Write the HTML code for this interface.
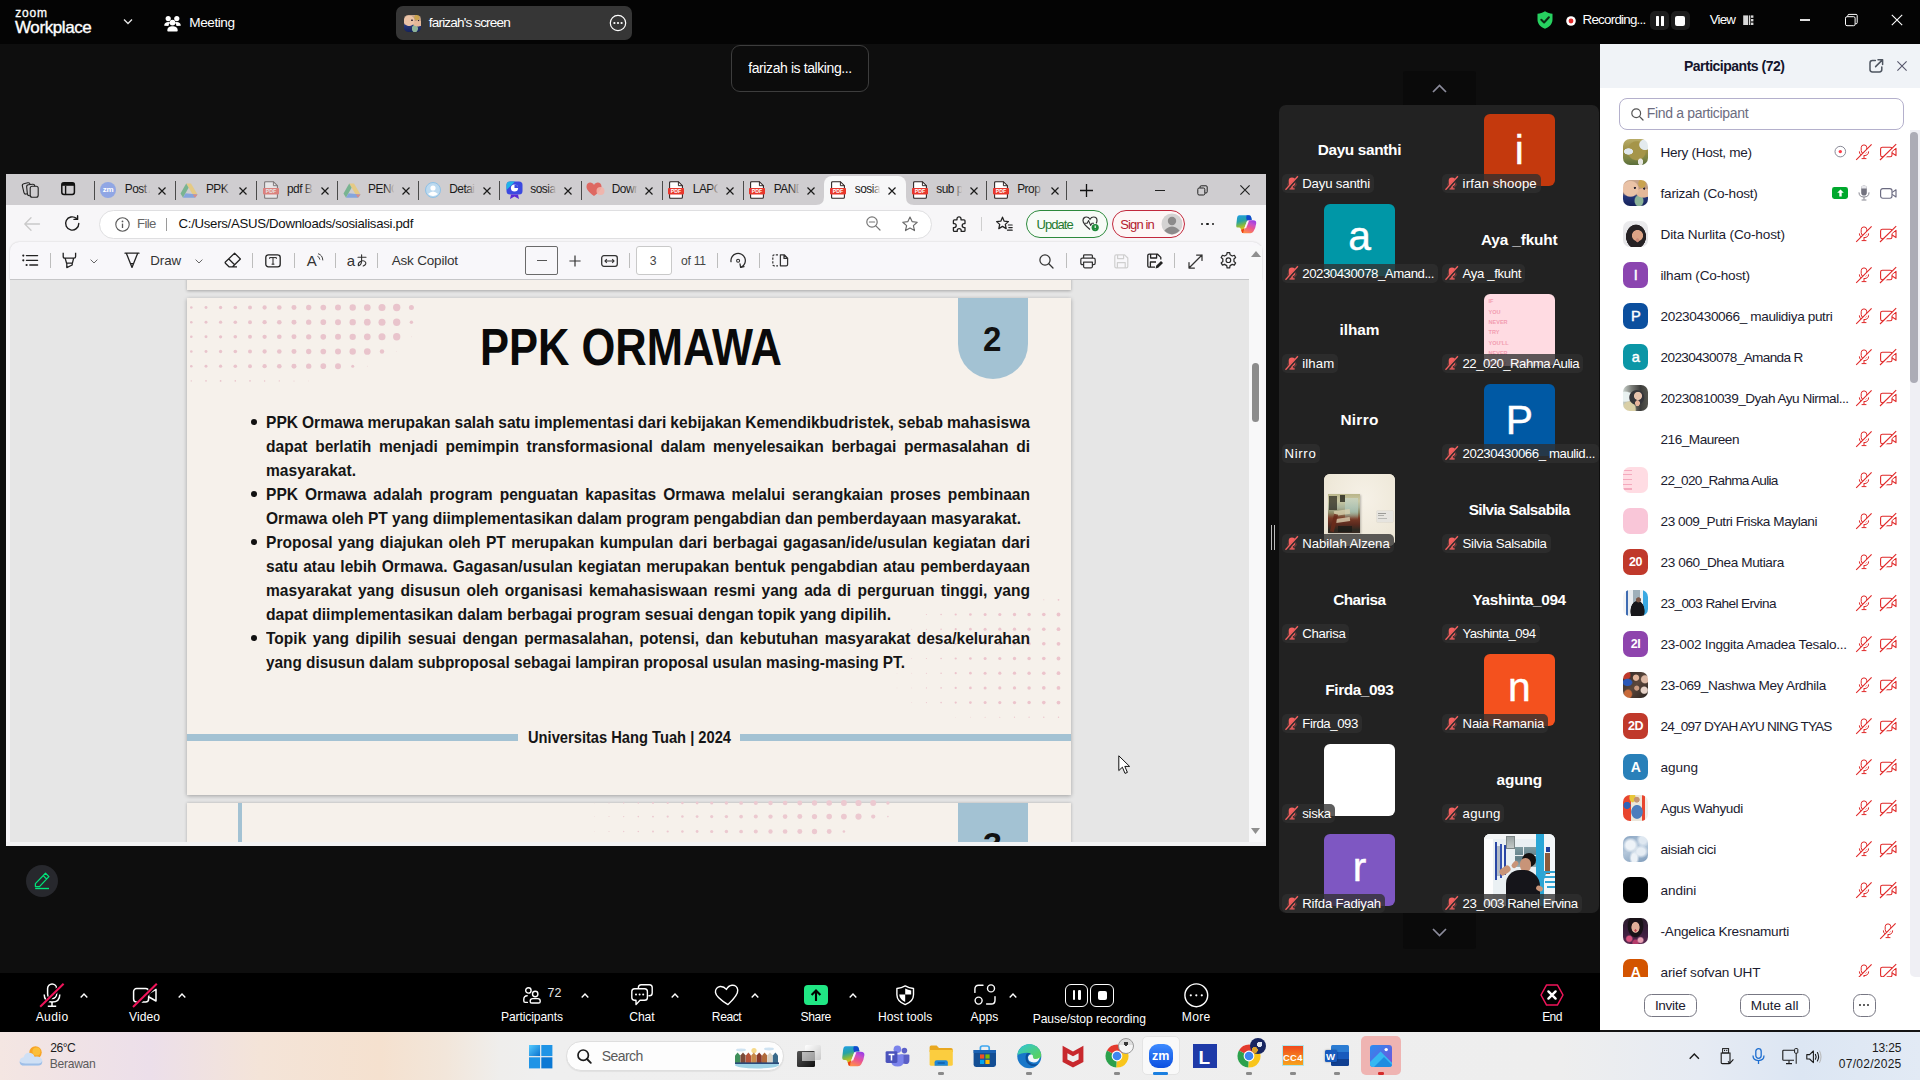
<!DOCTYPE html>
<html><head><meta charset="utf-8">
<style>
*{box-sizing:border-box;margin:0;padding:0}
html,body{width:1920px;height:1080px;overflow:hidden;background:#0e0e0e;font-family:"Liberation Sans",sans-serif;}
.abs{position:absolute}
#root{position:relative;width:1920px;height:1080px;overflow:hidden;background:#0e0e0e}
#topbar{left:0;top:0;width:1920px;height:44px;background:#040404;color:#fff}
svg{display:block;overflow:visible}
.t{position:absolute;white-space:nowrap;line-height:1}
</style></head><body><div id="root">

<div id="topbar" class="abs"><div class="t" style="left:15.34px;top:6.64px;font-size:12px;color:#fff;letter-spacing:0.775px;-webkit-text-stroke:0.3px #fff;">zoom</div>
<div class="t" style="left:15.06px;top:18.61px;font-size:17px;color:#fff;letter-spacing:-0.412px;-webkit-text-stroke:0.35px #fff;">Workplace</div>
<svg class="abs" style="left:123px;top:18px;" width="10" height="8" viewBox="0 0 10 8"><path d="M1 1.5 L5 5.5 L9 1.5" fill="none" stroke="#e8e8e8" stroke-width="1.3"/></svg>
<svg class="abs" style="left:164px;top:15px;" width="17" height="17" viewBox="0 0 17 17"><g fill="#fff"><circle cx="4.2" cy="3.6" r="2.6"/><circle cx="12.8" cy="3.6" r="2.6"/>
<path d="M0.2 10.8 C0.2 8 2 6.9 4.2 6.9 C5.2 6.9 6 7.1 6.6 7.5 C5.3 8.3 4.6 9.6 4.5 11 Z"/>
<path d="M16.8 10.8 C16.8 8 15 6.9 12.8 6.9 C11.8 6.9 11 7.1 10.4 7.5 C11.7 8.3 12.4 9.6 12.5 11 Z"/>
<circle cx="8.5" cy="7.6" r="2.9"/><path d="M3.3 15.6 C3.3 12.4 5.6 11.2 8.5 11.2 C11.4 11.2 13.7 12.4 13.7 15.6 C13.7 16.3 13.2 16.6 12.6 16.6 L4.4 16.6 C3.8 16.6 3.3 16.3 3.3 15.6 Z"/></g></svg>
<div class="t" style="left:189.25px;top:16.09px;font-size:13.6px;color:#fff;letter-spacing:-0.427px;">Meeting</div>
<div class="abs" style="left:396.2px;top:5.9px;width:235.8px;height:34px;background:#363636;border-radius:7px;"></div>
<div class="abs" style="left:404px;top:14.6px;width:17px;height:17px;background:#ccc;border-radius:4.5px;background:radial-gradient(circle at 47% 30%,#2b2430 0 4%,rgba(0,0,0,0) 6%),radial-gradient(circle at 85% 33%,#2b2430 0 3%,rgba(0,0,0,0) 5%),radial-gradient(ellipse at 30% 34%,#eac2a6 0 30%,rgba(0,0,0,0) 35%),radial-gradient(ellipse at 82% 50%,#e4b899 0 23%,rgba(0,0,0,0) 27%),radial-gradient(ellipse at 76% 14%,#c9a24e 0 12%,rgba(0,0,0,0) 16%),radial-gradient(ellipse at 64% 80%,#8db398 0 17%,rgba(0,0,0,0) 22%),linear-gradient(180deg,#c8a68e 0%,#b6927a 45%,#26377a 62%,#15225a 100%);"></div>
<div class="t" style="left:428.85px;top:16.09px;font-size:13.6px;color:#fff;letter-spacing:-0.858px;">farizah&#x27;s screen</div>
<svg class="abs" style="left:609px;top:14px;" width="18" height="18" viewBox="0 0 18 18"><circle cx="9" cy="9" r="7.7" fill="none" stroke="#fff" stroke-width="1.2"/><circle cx="5.4" cy="9" r="1.1" fill="#fff"/><circle cx="9" cy="9" r="1.1" fill="#fff"/><circle cx="12.6" cy="9" r="1.1" fill="#fff"/></svg>
<svg class="abs" style="left:1537px;top:11px;" width="16" height="18" viewBox="0 0 16 18"><path d="M8 0.3 C5.6 1.9 3 2.6 0.5 2.8 L0.5 8.5 C0.5 13 3.6 16.2 8 17.7 C12.4 16.2 15.5 13 15.5 8.5 L15.5 2.8 C13 2.6 10.4 1.9 8 0.3 Z" fill="#27d160"/><path d="M4.3 8.8 L7.1 11.5 L11.9 6.3" fill="none" stroke="#0b2a14" stroke-width="2" stroke-linecap="round" stroke-linejoin="round"/></svg>
<svg class="abs" style="left:1566px;top:16px;" width="10" height="10" viewBox="0 0 10 10"><circle cx="5" cy="5" r="4.8" fill="#fff"/><circle cx="5" cy="5" r="2.4" fill="#e02828"/></svg>
<div class="t" style="left:1582.56px;top:13.36px;font-size:13.4px;color:#fff;letter-spacing:-0.777px;">Recording...</div>
<div class="abs" style="left:1650px;top:11px;width:19px;height:19px;background:#1d1d1d;border-radius:5px;"></div>
<div class="abs" style="left:1655.8px;top:15.5px;width:3.2px;height:10.8px;background:#fff;border-radius:0.6px;"></div>
<div class="abs" style="left:1660.8px;top:15.5px;width:3.2px;height:10.8px;background:#fff;border-radius:0.6px;"></div>
<div class="abs" style="left:1671px;top:11px;width:19px;height:19px;background:#1d1d1d;border-radius:5px;"></div>
<div class="abs" style="left:1675px;top:15.8px;width:10px;height:10px;background:#fff;border-radius:2px;"></div>
<div class="t" style="left:1709.76px;top:13.36px;font-size:13.4px;color:#fff;letter-spacing:-0.877px;">View</div>
<svg class="abs" style="left:1743px;top:15px;" width="11" height="11" viewBox="0 0 11 11"><rect x="0.2" y="0.4" width="5" height="9.6" fill="#d8d8d8"/><rect x="6" y="0.4" width="1.3" height="9.6" fill="#d8d8d8"/><rect x="8" y="0.4" width="2.4" height="2.4" fill="#d8d8d8"/><rect x="8" y="4" width="2.4" height="2.4" fill="#d8d8d8"/><rect x="8" y="7.6" width="2.4" height="2.4" fill="#d8d8d8"/></svg>
<div class="abs" style="left:1799.6px;top:19.4px;width:10.8px;height:1.2px;background:#e0e0e0;"></div>
<svg class="abs" style="left:1844px;top:13px;" width="14" height="14" viewBox="0 0 14 14"><rect x="1.5" y="3.7" width="9.6" height="9" rx="1.5" fill="none" stroke="#fff" stroke-width="1"/><path d="M3.8 3.5 V2.6 Q3.8 1.4 5 1.4 H12 Q13.2 1.4 13.2 2.6 V9.6 Q13.2 10.8 12 10.8 H11.3" fill="none" stroke="#fff" stroke-width="1"/></svg>
<svg class="abs" style="left:1891px;top:14px;" width="12" height="12" viewBox="0 0 12 12"><path d="M0.8 0.8 L11.2 11.2 M11.2 0.8 L0.8 11.2" stroke="#fff" stroke-width="1.1"/></svg></div>
<div class="abs" style="left:731px;top:44.5px;width:138px;height:47px;background:#0c0c0c;border:1px solid #3d3d3d;border-radius:9px;"></div>
<div class="t" style="left:748.23px;top:61.35px;font-size:14px;color:#fff;letter-spacing:-0.406px;">farizah is talking...</div>
<div class="abs" style="left:26px;top:864.8px;width:32px;height:32.2px;background:#27282d;border-radius:50%;"></div>
<svg class="abs" style="left:34px;top:872px;" width="17" height="18" viewBox="0 0 17 18"><path d="M1.4 11.6 L11.5 1.2 L14.9 4.6 L5.5 14.6 H1.4 Z M9.2 3.6 L12.6 7" fill="none" stroke="#00e57a" stroke-width="1.25" stroke-linejoin="round"/><path d="M1.2 16.5 H15" stroke="#00e57a" stroke-width="1.35"/></svg>
<div class="abs" style="left:6px;top:174px;width:1260px;height:671.6px;background:#f7f6f8;overflow:hidden">
<div class="abs" style="left:0px;top:0px;width:1260px;height:30.6px;background:#cfcdd0;"></div>
<svg class="abs" style="left:16px;top:7px;" width="18" height="18" viewBox="0 0 18 18"><rect x="1.2" y="2.2" width="8" height="10.5" rx="2" fill="none" stroke="#222" stroke-width="1.1" transform="rotate(-14 5 8)"/><rect x="5" y="3.5" width="8.2" height="11" rx="2" fill="#cfcdd0" stroke="#222" stroke-width="1.1" transform="rotate(-6 9 9)"/><rect x="8.2" y="5.2" width="8" height="11" rx="2" fill="#cfcdd0" stroke="#222" stroke-width="1.1"/></svg>
<svg class="abs" style="left:55px;top:8px;" width="15" height="14" viewBox="0 0 15 14"><rect x="0.8" y="0.8" width="12.6" height="11.6" rx="2.2" fill="none" stroke="#111" stroke-width="1.5"/><rect x="0.8" y="0.8" width="12.6" height="3" fill="#111"/><path d="M4.6 3.8 V12.4" stroke="#111" stroke-width="1.4"/></svg>
<div class="abs" style="left:87.8px;top:7px;width:1px;height:18.5px;background:#4a4a4a;"></div>
<div class="abs" style="left:94.3px;top:7.5px;width:16px;height:16px;background:#7f9ce8;border-radius:50%;opacity:0.8;"></div><div class="t" style="left:96.86px;top:11.83px;font-size:8px;color:#fff;letter-spacing:-0.273px;font-weight:bold;">zm</div><div class="abs" style="left:118.8px;top:7px;width:27.5px;height:18px;overflow:hidden"><div class="t" style="left:0;top:2.83px;font-size:11.9px;letter-spacing:-0.5px;color:#1a1a1a">Post A</div><div class="abs" style="left:17px;top:0;width:10.5px;height:18px;background:linear-gradient(90deg,rgba(0,0,0,0),#cfcdd0 85%)"></div></div><svg class="abs" style="left:152.3px;top:12.5px;" width="8" height="8" viewBox="0 0 8 8"><path d="M0.5 0.5 L7.5 7.5 M7.5 0.5 L0.5 7.5" stroke="#1a1a1a" stroke-width="1.2"/></svg>
<div class="abs" style="left:168.9px;top:7px;width:1px;height:18.5px;background:#4a4a4a;"></div>
<svg class="abs" style="left:174.4px;top:8px;opacity:0.55;" width="18" height="17" viewBox="0 0 18 17"><path d="M6.2 1.5 L11 1.5 L17.5 12.5 L12.7 12.5 Z" fill="#f7c948"/><path d="M6.2 1.5 L0.5 11.5 L3 15.8 L8.6 5.7 Z" fill="#34a05f"/><path d="M3 15.8 L15 15.8 L17.5 12.5 L5.6 11.3 Z" fill="#4a86e8"/><path d="M12.7 12.5 L17.5 12.5 L15 15.8 Z" fill="#e35b4f"/></svg><div class="abs" style="left:199.9px;top:7px;width:27.5px;height:18px;overflow:hidden"><div class="t" style="left:0;top:2.83px;font-size:11.9px;letter-spacing:-0.5px;color:#1a1a1a">PPK O</div><div class="abs" style="left:17px;top:0;width:10.5px;height:18px;background:linear-gradient(90deg,rgba(0,0,0,0),#cfcdd0 85%)"></div></div><svg class="abs" style="left:233.4px;top:12.5px;" width="8" height="8" viewBox="0 0 8 8"><path d="M0.5 0.5 L7.5 7.5 M7.5 0.5 L0.5 7.5" stroke="#1a1a1a" stroke-width="1.2"/></svg>
<div class="abs" style="left:250.0px;top:7px;width:1px;height:18.5px;background:#4a4a4a;"></div>
<svg class="abs" style="left:256.5px;top:7px;opacity:0.5;" width="16" height="18" viewBox="0 0 16 18"><path d="M2.6 0.7 H10.4 L14.4 4.7 V16.3 Q14.4 17.3 13.4 17.3 H2.6 Q1.6 17.3 1.6 16.3 V1.7 Q1.6 0.7 2.6 0.7 Z" fill="#fff" stroke="#2a2020" stroke-width="1.05"/><path d="M10.4 0.7 V4.7 H14.4" fill="none" stroke="#2a2020" stroke-width="0.95"/><rect x="0" y="7" width="16" height="6.4" rx="0.8" fill="#e8372c"/><text x="8" y="12.1" font-size="5.2" font-weight="bold" fill="#fff" text-anchor="middle" font-family="Liberation Sans" >PDF</text></svg><div class="abs" style="left:281.0px;top:7px;width:27.5px;height:18px;overflow:hidden"><div class="t" style="left:0;top:2.83px;font-size:11.9px;letter-spacing:-0.5px;color:#1a1a1a">pdf B</div><div class="abs" style="left:17px;top:0;width:10.5px;height:18px;background:linear-gradient(90deg,rgba(0,0,0,0),#cfcdd0 85%)"></div></div><svg class="abs" style="left:314.5px;top:12.5px;" width="8" height="8" viewBox="0 0 8 8"><path d="M0.5 0.5 L7.5 7.5 M7.5 0.5 L0.5 7.5" stroke="#1a1a1a" stroke-width="1.2"/></svg>
<div class="abs" style="left:331.1px;top:7px;width:1px;height:18.5px;background:#4a4a4a;"></div>
<svg class="abs" style="left:336.6px;top:8px;opacity:0.55;" width="18" height="17" viewBox="0 0 18 17"><path d="M6.2 1.5 L11 1.5 L17.5 12.5 L12.7 12.5 Z" fill="#f7c948"/><path d="M6.2 1.5 L0.5 11.5 L3 15.8 L8.6 5.7 Z" fill="#34a05f"/><path d="M3 15.8 L15 15.8 L17.5 12.5 L5.6 11.3 Z" fill="#4a86e8"/><path d="M12.7 12.5 L17.5 12.5 L15 15.8 Z" fill="#e35b4f"/></svg><div class="abs" style="left:362.1px;top:7px;width:27.5px;height:18px;overflow:hidden"><div class="t" style="left:0;top:2.83px;font-size:11.9px;letter-spacing:-0.5px;color:#1a1a1a">PENC</div><div class="abs" style="left:17px;top:0;width:10.5px;height:18px;background:linear-gradient(90deg,rgba(0,0,0,0),#cfcdd0 85%)"></div></div><svg class="abs" style="left:395.6px;top:12.5px;" width="8" height="8" viewBox="0 0 8 8"><path d="M0.5 0.5 L7.5 7.5 M7.5 0.5 L0.5 7.5" stroke="#1a1a1a" stroke-width="1.2"/></svg>
<div class="abs" style="left:412.2px;top:7px;width:1px;height:18.5px;background:#4a4a4a;"></div>
<svg class="abs" style="left:418.7px;top:7.5px;" width="16" height="16" viewBox="0 0 16 16"><circle cx="8" cy="8" r="7.5" fill="#bcd9ef"/><circle cx="8" cy="6" r="2.6" fill="#fff"/><path d="M3 12 Q8 7 13 12 Q8 16 3 12Z" fill="#fff"/><circle cx="8" cy="8" r="7.5" fill="none" stroke="#8fc1e6" stroke-width="1"/></svg><div class="abs" style="left:443.2px;top:7px;width:27.5px;height:18px;overflow:hidden"><div class="t" style="left:0;top:2.83px;font-size:11.9px;letter-spacing:-0.5px;color:#1a1a1a">Detail</div><div class="abs" style="left:17px;top:0;width:10.5px;height:18px;background:linear-gradient(90deg,rgba(0,0,0,0),#cfcdd0 85%)"></div></div><svg class="abs" style="left:476.7px;top:12.5px;" width="8" height="8" viewBox="0 0 8 8"><path d="M0.5 0.5 L7.5 7.5 M7.5 0.5 L0.5 7.5" stroke="#1a1a1a" stroke-width="1.2"/></svg>
<div class="abs" style="left:493.3px;top:7px;width:1px;height:18.5px;background:#4a4a4a;"></div>
<svg class="abs" style="left:499.8px;top:6.5px;" width="17" height="19" viewBox="0 0 17 19"><rect x="0.5" y="0.5" width="16" height="13" rx="3.5" fill="#3b49e0"/><path d="M0.5 4 Q0.5 0.5 4 0.5 H9 L0.5 9Z" fill="#1fb4e8"/><circle cx="8.5" cy="7" r="3.6" fill="#fff"/><path d="M8.5 7 V3.4 A3.6 3.6 0 0 1 12.1 7 Z" fill="#3b49e0"/><path d="M5 13.5 L4 18 L8.5 15.5 L13 18 L12 13.5Z" fill="#5a2ad6"/></svg><div class="abs" style="left:524.3px;top:7px;width:27.5px;height:18px;overflow:hidden"><div class="t" style="left:0;top:2.83px;font-size:11.9px;letter-spacing:-0.5px;color:#1a1a1a">sosial</div><div class="abs" style="left:17px;top:0;width:10.5px;height:18px;background:linear-gradient(90deg,rgba(0,0,0,0),#cfcdd0 85%)"></div></div><svg class="abs" style="left:557.8px;top:12.5px;" width="8" height="8" viewBox="0 0 8 8"><path d="M0.5 0.5 L7.5 7.5 M7.5 0.5 L0.5 7.5" stroke="#1a1a1a" stroke-width="1.2"/></svg>
<div class="abs" style="left:574.7px;top:7px;width:1px;height:18.5px;background:#4a4a4a;"></div>
<svg class="abs" style="left:580.2px;top:8px;" width="19" height="16" viewBox="0 0 19 16"><path d="M8 14 C2 9.5 0.5 6.8 0.5 4.4 C0.5 2 2.3 0.6 4.2 0.6 C5.8 0.6 7.2 1.5 8 2.9 C8.8 1.5 10.2 0.6 11.8 0.6 C13.7 0.6 15.5 2 15.5 4.4 C15.5 6.8 14 9.5 8 14Z" fill="#e0564f" opacity="0.85"/><circle cx="14.5" cy="9" r="4" fill="#f2b2a8" opacity="0.9"/></svg><div class="abs" style="left:605.7px;top:7px;width:27.5px;height:18px;overflow:hidden"><div class="t" style="left:0;top:2.83px;font-size:11.9px;letter-spacing:-0.5px;color:#1a1a1a">Down</div><div class="abs" style="left:17px;top:0;width:10.5px;height:18px;background:linear-gradient(90deg,rgba(0,0,0,0),#cfcdd0 85%)"></div></div><svg class="abs" style="left:639.2px;top:12.5px;" width="8" height="8" viewBox="0 0 8 8"><path d="M0.5 0.5 L7.5 7.5 M7.5 0.5 L0.5 7.5" stroke="#1a1a1a" stroke-width="1.2"/></svg>
<div class="abs" style="left:655.8px;top:7px;width:1px;height:18.5px;background:#4a4a4a;"></div>
<svg class="abs" style="left:662.3px;top:7px;" width="16" height="18" viewBox="0 0 16 18"><path d="M2.6 0.7 H10.4 L14.4 4.7 V16.3 Q14.4 17.3 13.4 17.3 H2.6 Q1.6 17.3 1.6 16.3 V1.7 Q1.6 0.7 2.6 0.7 Z" fill="#fff" stroke="#2a2020" stroke-width="1.05"/><path d="M10.4 0.7 V4.7 H14.4" fill="none" stroke="#2a2020" stroke-width="0.95"/><rect x="0" y="7" width="16" height="6.4" rx="0.8" fill="#e8372c"/><text x="8" y="12.1" font-size="5.2" font-weight="bold" fill="#fff" text-anchor="middle" font-family="Liberation Sans" >PDF</text></svg><div class="abs" style="left:686.8px;top:7px;width:27.5px;height:18px;overflow:hidden"><div class="t" style="left:0;top:2.83px;font-size:11.9px;letter-spacing:-0.5px;color:#1a1a1a">LAPO</div><div class="abs" style="left:17px;top:0;width:10.5px;height:18px;background:linear-gradient(90deg,rgba(0,0,0,0),#cfcdd0 85%)"></div></div><svg class="abs" style="left:720.3px;top:12.5px;" width="8" height="8" viewBox="0 0 8 8"><path d="M0.5 0.5 L7.5 7.5 M7.5 0.5 L0.5 7.5" stroke="#1a1a1a" stroke-width="1.2"/></svg>
<div class="abs" style="left:736.8px;top:7px;width:1px;height:18.5px;background:#4a4a4a;"></div>
<svg class="abs" style="left:743.3px;top:7px;" width="16" height="18" viewBox="0 0 16 18"><path d="M2.6 0.7 H10.4 L14.4 4.7 V16.3 Q14.4 17.3 13.4 17.3 H2.6 Q1.6 17.3 1.6 16.3 V1.7 Q1.6 0.7 2.6 0.7 Z" fill="#fff" stroke="#2a2020" stroke-width="1.05"/><path d="M10.4 0.7 V4.7 H14.4" fill="none" stroke="#2a2020" stroke-width="0.95"/><rect x="0" y="7" width="16" height="6.4" rx="0.8" fill="#e8372c"/><text x="8" y="12.1" font-size="5.2" font-weight="bold" fill="#fff" text-anchor="middle" font-family="Liberation Sans" >PDF</text></svg><div class="abs" style="left:767.8px;top:7px;width:27.5px;height:18px;overflow:hidden"><div class="t" style="left:0;top:2.83px;font-size:11.9px;letter-spacing:-0.5px;color:#1a1a1a">PAND</div><div class="abs" style="left:17px;top:0;width:10.5px;height:18px;background:linear-gradient(90deg,rgba(0,0,0,0),#cfcdd0 85%)"></div></div><svg class="abs" style="left:801.3px;top:12.5px;" width="8" height="8" viewBox="0 0 8 8"><path d="M0.5 0.5 L7.5 7.5 M7.5 0.5 L0.5 7.5" stroke="#1a1a1a" stroke-width="1.2"/></svg>
<div class="abs" style="left:818.3px;top:1.5px;width:81.4px;height:30px;background:#f7f7f8;border-radius:8px 8px 0 0;"></div>
<svg class="abs" style="left:810.3px;top:22.599999999999994px;" width="8" height="8" viewBox="0 0 8 8"><path d="M8 0 V8 H0 Q8 8 8 0Z" fill="#f7f7f8"/></svg>
<svg class="abs" style="left:899.7px;top:22.599999999999994px;" width="8" height="8" viewBox="0 0 8 8"><path d="M0 0 V8 H8 Q0 8 0 0Z" fill="#f7f7f8"/></svg>
<svg class="abs" style="left:824.3px;top:7px;" width="16" height="18" viewBox="0 0 16 18"><path d="M2.6 0.7 H10.4 L14.4 4.7 V16.3 Q14.4 17.3 13.4 17.3 H2.6 Q1.6 17.3 1.6 16.3 V1.7 Q1.6 0.7 2.6 0.7 Z" fill="#fff" stroke="#2a2020" stroke-width="1.05"/><path d="M10.4 0.7 V4.7 H14.4" fill="none" stroke="#2a2020" stroke-width="0.95"/><rect x="0" y="7" width="16" height="6.4" rx="0.8" fill="#e8372c"/><text x="8" y="12.1" font-size="5.2" font-weight="bold" fill="#fff" text-anchor="middle" font-family="Liberation Sans" >PDF</text></svg><div class="abs" style="left:848.8px;top:7px;width:27.5px;height:18px;overflow:hidden"><div class="t" style="left:0;top:2.83px;font-size:11.9px;letter-spacing:-0.5px;color:#1a1a1a">sosial</div><div class="abs" style="left:17px;top:0;width:10.5px;height:18px;background:linear-gradient(90deg,rgba(0,0,0,0),#f7f7f8 85%)"></div></div><svg class="abs" style="left:882.3px;top:12.5px;" width="8" height="8" viewBox="0 0 8 8"><path d="M0.5 0.5 L7.5 7.5 M7.5 0.5 L0.5 7.5" stroke="#1a1a1a" stroke-width="1.2"/></svg>
<svg class="abs" style="left:905.7px;top:7px;" width="16" height="18" viewBox="0 0 16 18"><path d="M2.6 0.7 H10.4 L14.4 4.7 V16.3 Q14.4 17.3 13.4 17.3 H2.6 Q1.6 17.3 1.6 16.3 V1.7 Q1.6 0.7 2.6 0.7 Z" fill="#fff" stroke="#2a2020" stroke-width="1.05"/><path d="M10.4 0.7 V4.7 H14.4" fill="none" stroke="#2a2020" stroke-width="0.95"/><rect x="0" y="7" width="16" height="6.4" rx="0.8" fill="#e8372c"/><text x="8" y="12.1" font-size="5.2" font-weight="bold" fill="#fff" text-anchor="middle" font-family="Liberation Sans" >PDF</text></svg><div class="abs" style="left:930.2px;top:7px;width:27.5px;height:18px;overflow:hidden"><div class="t" style="left:0;top:2.83px;font-size:11.9px;letter-spacing:-0.5px;color:#1a1a1a">sub p</div><div class="abs" style="left:17px;top:0;width:10.5px;height:18px;background:linear-gradient(90deg,rgba(0,0,0,0),#cfcdd0 85%)"></div></div><svg class="abs" style="left:963.7px;top:12.5px;" width="8" height="8" viewBox="0 0 8 8"><path d="M0.5 0.5 L7.5 7.5 M7.5 0.5 L0.5 7.5" stroke="#1a1a1a" stroke-width="1.2"/></svg>
<div class="abs" style="left:980.2px;top:7px;width:1px;height:18.5px;background:#4a4a4a;"></div>
<svg class="abs" style="left:986.7px;top:7px;" width="16" height="18" viewBox="0 0 16 18"><path d="M2.6 0.7 H10.4 L14.4 4.7 V16.3 Q14.4 17.3 13.4 17.3 H2.6 Q1.6 17.3 1.6 16.3 V1.7 Q1.6 0.7 2.6 0.7 Z" fill="#fff" stroke="#2a2020" stroke-width="1.05"/><path d="M10.4 0.7 V4.7 H14.4" fill="none" stroke="#2a2020" stroke-width="0.95"/><rect x="0" y="7" width="16" height="6.4" rx="0.8" fill="#e8372c"/><text x="8" y="12.1" font-size="5.2" font-weight="bold" fill="#fff" text-anchor="middle" font-family="Liberation Sans" >PDF</text></svg><div class="abs" style="left:1011.2px;top:7px;width:27.5px;height:18px;overflow:hidden"><div class="t" style="left:0;top:2.83px;font-size:11.9px;letter-spacing:-0.5px;color:#1a1a1a">Prop</div><div class="abs" style="left:17px;top:0;width:10.5px;height:18px;background:linear-gradient(90deg,rgba(0,0,0,0),#cfcdd0 85%)"></div></div><svg class="abs" style="left:1044.7px;top:12.5px;" width="8" height="8" viewBox="0 0 8 8"><path d="M0.5 0.5 L7.5 7.5 M7.5 0.5 L0.5 7.5" stroke="#1a1a1a" stroke-width="1.2"/></svg>
<div class="abs" style="left:1060.2px;top:7px;width:1px;height:18.5px;background:#4a4a4a;"></div>
<svg class="abs" style="left:1074px;top:9.5px;" width="13" height="13" viewBox="0 0 13 13"><path d="M6.5 0 V13 M0 6.5 H13" stroke="#111" stroke-width="1.3"/></svg>
<div class="abs" style="left:1149px;top:15.800000000000011px;width:10px;height:1.1px;background:#222;"></div>
<svg class="abs" style="left:1191px;top:10.5px;" width="11" height="11" viewBox="0 0 11 11"><rect x="0.8" y="3" width="7" height="7" rx="1.3" fill="none" stroke="#222" stroke-width="1"/><path d="M3 2.8 V2 Q3 0.8 4.2 0.8 H9 Q10.2 0.8 10.2 2 V6.8 Q10.2 8 9 8 H8" fill="none" stroke="#222" stroke-width="1"/></svg>
<svg class="abs" style="left:1234px;top:11px;" width="10" height="10" viewBox="0 0 10 10"><path d="M0.4 0.4 L9.6 9.6 M9.6 0.4 L0.4 9.6" stroke="#222" stroke-width="1.15"/></svg>
<svg class="abs" style="left:18px;top:43px;" width="16" height="14" viewBox="0 0 16 14"><path d="M15.5 7 H1.2 M7 0.8 L0.8 7 L7 13.2" fill="none" stroke="#c9c9c9" stroke-width="1.3" stroke-linecap="round" stroke-linejoin="round"/></svg>
<svg class="abs" style="left:58px;top:41px;" width="17" height="17" viewBox="0 0 17 17"><path d="M14.8 8.5 A6.6 6.6 0 1 1 12.4 3.4" fill="none" stroke="#1a1a1a" stroke-width="1.4" stroke-linecap="round"/><path d="M13.6 0.8 V4.4 H10" fill="none" stroke="#1a1a1a" stroke-width="1.4" stroke-linecap="round" stroke-linejoin="round"/></svg>
<div class="abs" style="left:93px;top:35.5px;width:833px;height:29px;background:#fff;border:1px solid #dfdfe1;border-radius:15px;"></div>
<svg class="abs" style="left:108.5px;top:42.5px;" width="15" height="15" viewBox="0 0 15 15"><circle cx="7.5" cy="7.5" r="6.7" fill="none" stroke="#5a5a5a" stroke-width="1.1"/><circle cx="7.5" cy="4.4" r="0.9" fill="#5a5a5a"/><path d="M7.5 6.6 V11" stroke="#5a5a5a" stroke-width="1.3"/></svg>
<div class="t" style="left:130.97px;top:43.43px;font-size:13.2px;color:#666;letter-spacing:-0.625px;">File</div>
<div class="abs" style="left:160.3px;top:43.5px;width:1px;height:13px;background:#9a9a9a;"></div>
<div class="t" style="left:172.57px;top:43.33px;font-size:13.2px;color:#111;letter-spacing:-0.284px;">C:/Users/ASUS/Downloads/sosialisasi.pdf</div>
<svg class="abs" style="left:860px;top:42px;" width="15" height="15" viewBox="0 0 15 15"><circle cx="6" cy="6" r="5.2" fill="none" stroke="#767676" stroke-width="1.2"/><path d="M3.4 6 H8.6 M9.8 9.8 L14 14" stroke="#767676" stroke-width="1.2" stroke-linecap="round"/></svg>
<svg class="abs" style="left:896px;top:41.5px;" width="16" height="16" viewBox="0 0 16 16"><path d="M8 1 L10.1 5.6 L15.2 6.2 L11.4 9.6 L12.5 14.6 L8 12 L3.5 14.6 L4.6 9.6 L0.8 6.2 L5.9 5.6 Z" fill="none" stroke="#6a6a6a" stroke-width="1.15" stroke-linejoin="round"/></svg>
<svg class="abs" style="left:945px;top:41.5px;" width="16" height="17" viewBox="0 0 16 17"><path d="M6 2.8 A2 2 0 0 1 10 2.8 V3.8 H13 Q14 3.8 14 4.8 V7.6 H13.2 A2 2 0 0 0 13.2 11.6 H14 V14.4 Q14 15.4 13 15.4 H10.2 V14.6 A2 2 0 0 0 6.2 14.6 V15.4 H3.4 Q2.4 15.4 2.4 14.4 V11.6 H3.2 A2 2 0 0 0 3.2 7.6 H2.4 V4.8 Q2.4 3.8 3.4 3.8 H6 Z" fill="none" stroke="#222" stroke-width="1.3" stroke-linejoin="round"/></svg>
<div class="abs" style="left:975px;top:43px;width:1px;height:14px;background:#cfcfcf;"></div>
<svg class="abs" style="left:990px;top:41.5px;" width="17" height="16" viewBox="0 0 17 16"><path d="M6.5 1.2 L8.2 5.2 L12.4 5.6 L9.3 8.4 L10.2 12.6 L6.5 10.4 L2.8 12.6 L3.7 8.4 L0.6 5.6 L4.8 5.2 Z" fill="none" stroke="#222" stroke-width="1.25" stroke-linejoin="round"/><path d="M12.4 9 H16.2 M12.8 11.6 H16.2 M11.5 14.2 H16.2" stroke="#222" stroke-width="1.2" stroke-linecap="round"/></svg>
<div class="abs" style="left:1020px;top:36px;width:81.5px;height:28px;background:#f7fbf7;border:1.3px solid #2c8a3c;border-radius:14px;"></div>
<div class="t" style="left:1030.59px;top:43.50px;font-size:13px;color:#1f7a2e;letter-spacing:-0.960px;">Update</div>
<svg class="abs" style="left:1075.5px;top:42px;" width="18" height="16" viewBox="0 0 18 16"><path d="M8 13.5 C3 9.6 1 7.2 1 4.6 C1 2.4 2.7 1 4.4 1 C6 1 7.3 2 8 3.2 C8.7 2 10 1 11.6 1 C13.3 1 15 2.4 15 4.6 C15 5.6 14.7 6.5 14.2 7.4" fill="none" stroke="#333" stroke-width="1.2"/><path d="M2.4 7.2 H5.2 L6.6 4.6 L8.6 9.4 L10 7.2 H12" fill="none" stroke="#333" stroke-width="1.1" stroke-linejoin="round"/><circle cx="13.2" cy="11.6" r="3.6" fill="#1f8a3a"/><path d="M13.2 9.6 V12 M13.2 13.2 V13.6" stroke="#fff" stroke-width="1.1"/></svg>
<div class="abs" style="left:1105.7px;top:36px;width:73.5px;height:28px;background:#fdf6f6;border:1.3px solid #c2283c;border-radius:14px;"></div>
<div class="t" style="left:1114.29px;top:43.50px;font-size:13px;color:#b3202f;letter-spacing:-0.863px;">Sign in</div>
<svg class="abs" style="left:1155px;top:39px;" width="22" height="22" viewBox="0 0 22 22"><circle cx="11" cy="11" r="10.5" fill="#d4d2d2"/><circle cx="11" cy="8" r="4.2" fill="#8c8a8a"/><path d="M3.4 17.6 Q11 9.5 18.6 17.6 Q15 21.4 11 21.4 Q7 21.4 3.4 17.6Z" fill="#8c8a8a"/></svg>
<div class="abs" style="left:1194.6px;top:48.80000000000001px;width:2.6px;height:2.6px;background:#1a1a1a;border-radius:50%;"></div>
<div class="abs" style="left:1200.1999999999998px;top:48.80000000000001px;width:2.6px;height:2.6px;background:#1a1a1a;border-radius:50%;"></div>
<div class="abs" style="left:1205.8px;top:48.80000000000001px;width:2.6px;height:2.6px;background:#1a1a1a;border-radius:50%;"></div>
<svg class="abs" style="left:1229.6px;top:40.5px;" width="20.4" height="18.7" viewBox="0 0 20.4 18.7"><defs><linearGradient id="cpa1" x1="0" y1="0" x2="0.25" y2="1"><stop offset="0" stop-color="#1f9ee8"/><stop offset="0.38" stop-color="#27a3a4"/><stop offset="0.6" stop-color="#7cb848"/><stop offset="0.8" stop-color="#d2c022"/><stop offset="1" stop-color="#f2801e"/></linearGradient><linearGradient id="cpb1" x1="0.7" y1="0" x2="0.3" y2="1"><stop offset="0" stop-color="#9a3ee6"/><stop offset="0.28" stop-color="#c84fc8"/><stop offset="0.55" stop-color="#ea5590"/><stop offset="1" stop-color="#ff8c4a"/></linearGradient></defs><path d="M12.6 5.2 H17 Q20.6 5.2 20.2 8.4 Q19.6 13.4 17.4 16.6 Q16.4 18.3 14.4 18.3 H8 Q6.2 18.3 7.6 16 L11.2 7 Q11.8 5.2 12.6 5.2 Z" fill="url(#cpb1)"/><path d="M3.4 0.3 H13 Q14.8 0.3 15.2 2.2 L15.8 4.8 H12.8 Q11.4 4.8 10.8 6.4 L8.4 13.2 L7.4 17 Q7 18.6 6 17.4 L4.6 13.6 Q4.2 12.6 3 12.6 H1.6 Q0 12.6 0.2 10.4 L1 3.4 Q1.4 0.3 3.4 0.3 Z" fill="url(#cpa1)"/><path d="M10.6 0.3 H13 Q14.8 0.3 15.2 2.2 L15.8 4.9 H12.8 Q11.6 4.9 11 6 Q9.6 3 10.6 0.3 Z" fill="#0d3fd2" opacity="0.9"/><path d="M5.2 15 L8.2 13.4 L7.4 17 Q7 18.6 6 17.4 Z" fill="#f03412" opacity="0.9"/><path d="M11.3 5.7 H13 L10.1 13.2 H8.3 Z" fill="#fff" opacity="0.92"/></svg>
<div class="abs" style="left:4px;top:67.80000000000001px;width:1252px;height:38px;background:#f8f7fa;border-radius:9px 9px 0 0;box-shadow:0 0 2px rgba(0,0,0,0.18);"></div>
<svg class="abs" style="left:16px;top:80px;" width="17" height="13" viewBox="0 0 17 13"><circle cx="1.3" cy="1.6" r="1.1" fill="#222"/><circle cx="1.3" cy="6.3" r="1.1" fill="#222"/><circle cx="4.6" cy="11" r="1.1" fill="#222"/><path d="M4.4 1.6 H15.6 M4.4 6.3 H15.6 M7.8 11 H15.6" stroke="#222" stroke-width="1.3" stroke-linecap="round"/></svg>
<div class="abs" style="left:44px;top:78.5px;width:1px;height:15px;background:#bdbdbd;"></div>
<svg class="abs" style="left:56px;top:78px;" width="15" height="17" viewBox="0 0 15 17"><path d="M1.2 0.8 V4.6 Q1.2 6.2 2.8 6.2 H12 Q13.6 6.2 13.6 4.6 V0.8 M3.2 6.4 L4.6 11.2 H10.4 L11.6 6.4 M4.8 11.4 V15.6 L10.2 13 V11.4" fill="none" stroke="#222" stroke-width="1.3" stroke-linejoin="round"/></svg>
<svg class="abs" style="left:84px;top:84.5px;" width="8" height="5" viewBox="0 0 8 5"><path d="M0.6 0.6 L4 4 L7.4 0.6" fill="none" stroke="#666" stroke-width="1"/></svg>
<svg class="abs" style="left:118px;top:78px;" width="16" height="17" viewBox="0 0 16 17"><path d="M1 1.2 H15 M2.4 1.4 L8 15.4 L13.6 1.4 M6.4 11.6 H9.6" fill="none" stroke="#222" stroke-width="1.3" stroke-linejoin="round" stroke-linecap="round"/></svg>
<div class="t" style="left:144.27px;top:80.04px;font-size:13.3px;color:#333;letter-spacing:-0.071px;">Draw</div>
<svg class="abs" style="left:189px;top:84.5px;" width="8" height="5" viewBox="0 0 8 5"><path d="M0.6 0.6 L4 4 L7.4 0.6" fill="none" stroke="#666" stroke-width="1"/></svg>
<svg class="abs" style="left:218px;top:78px;" width="18" height="17" viewBox="0 0 18 17"><path d="M10.6 1.2 L16.4 7 L8.6 14.8 H5 L1.4 11.2 Q0.8 10.6 1.4 10 Z M4.6 6.8 L10.6 12.8 M5 14.8 H13" fill="none" stroke="#222" stroke-width="1.25" stroke-linejoin="round"/></svg>
<div class="abs" style="left:246px;top:78.5px;width:1px;height:15px;background:#bdbdbd;"></div>
<svg class="abs" style="left:259px;top:79.5px;" width="16" height="14" viewBox="0 0 16 14"><rect x="0.8" y="0.8" width="14.4" height="12" rx="2.6" fill="none" stroke="#222" stroke-width="1.3"/><path d="M4.6 3.6 H11.4 M4.6 3.6 V4.8 M11.4 3.6 V4.8 M8 3.6 V10.2 M6.6 10.2 H9.4" stroke="#222" stroke-width="1" fill="none"/></svg>
<div class="abs" style="left:288px;top:78.5px;width:1px;height:15px;background:#bdbdbd;"></div>
<div class="t" style="left:300.68px;top:79.30px;font-size:15px;color:#333;letter-spacing:0.814px;">A</div>
<svg class="abs" style="left:310.5px;top:79px;" width="8" height="9" viewBox="0 0 8 9"><path d="M0.8 3.4 Q2.6 4 2.8 6.2 M1.4 0.8 Q5.6 2 5.8 7" fill="none" stroke="#444" stroke-width="1" stroke-linecap="round"/></svg>
<div class="abs" style="left:329px;top:78.5px;width:1px;height:15px;background:#bdbdbd;"></div>
<div class="t" style="left:340.68px;top:78.80px;font-size:15px;color:#333;letter-spacing:1.478px;">a</div>
<svg class="abs" style="left:350.5px;top:79.5px;" width="10" height="13" viewBox="0 0 10 13"><path d="M1 3.2 H9 M4.6 0.8 V6 Q4.6 11.6 1.4 11.6 Q0.6 9 3.4 7.4 Q7 5.8 8.6 8.2 Q9.6 10.6 6.2 12" fill="none" stroke="#333" stroke-width="1.1" stroke-linecap="round"/></svg>
<div class="abs" style="left:371px;top:78.5px;width:1px;height:15px;background:#bdbdbd;"></div>
<div class="t" style="left:385.76px;top:79.87px;font-size:13.5px;color:#333;letter-spacing:-0.199px;">Ask Copilot</div>
<div class="abs" style="left:519.3px;top:72.30000000000001px;width:32.7px;height:28.9px;background:#f8f7fa;border:1.6px solid #6a6a6a;border-radius:2px;"></div>
<div class="abs" style="left:530.6px;top:86.30000000000001px;width:10.2px;height:1.2px;background:#555;"></div>
<svg class="abs" style="left:563px;top:81px;" width="12" height="12" viewBox="0 0 12 12"><path d="M6 0.4 V11.6 M0.4 6 H11.6" stroke="#333" stroke-width="1.2"/></svg>
<svg class="abs" style="left:594.5px;top:80.5px;" width="17" height="12" viewBox="0 0 17 12"><rect x="0.7" y="0.7" width="15.6" height="10.6" rx="2.2" fill="none" stroke="#333" stroke-width="1.3"/><path d="M4 6 H13 M5.8 4.2 L4 6 L5.8 7.8 M11.2 4.2 L13 6 L11.2 7.8" fill="none" stroke="#333" stroke-width="1.1"/></svg>
<div class="abs" style="left:623px;top:78.5px;width:1px;height:15px;background:#bdbdbd;"></div>
<div class="abs" style="left:629.5px;top:72.30000000000001px;width:36.5px;height:28.9px;background:#fff;border:1px solid #c9c9c9;border-radius:3px;"></div>
<div class="t" style="left:643.83px;top:80.87px;font-size:12.2px;color:#444;letter-spacing:0.861px;">3</div>
<div class="t" style="left:675.03px;top:80.87px;font-size:12.2px;color:#444;letter-spacing:-0.281px;">of 11</div>
<div class="abs" style="left:711px;top:78.5px;width:1px;height:15px;background:#bdbdbd;"></div>
<svg class="abs" style="left:724px;top:78px;" width="17" height="17" viewBox="0 0 17 17"><path d="M1 9.6 A7.2 7.2 0 1 1 11.4 15" fill="none" stroke="#2a2a2a" stroke-width="1.25" stroke-linecap="round"/><path d="M10 11.8 L10.6 15.3 L14 14.6" fill="none" stroke="#2a2a2a" stroke-width="1.25" stroke-linecap="round" stroke-linejoin="round"/><circle cx="8.1" cy="8.7" r="1.5" fill="none" stroke="#2a2a2a" stroke-width="1.05"/></svg>
<div class="abs" style="left:753px;top:78.5px;width:1px;height:15px;background:#bdbdbd;"></div>
<svg class="abs" style="left:765.5px;top:80px;" width="17" height="13" viewBox="0 0 17 13"><path d="M6 0.8 H2.2 Q0.8 0.8 0.8 2.2 V10.4 Q0.8 11.8 2.2 11.8 H6" fill="none" stroke="#333" stroke-width="1.2" stroke-dasharray="2.2 1.4"/><path d="M8.4 0.8 H12.2 L15.6 4.2 V10.4 Q15.6 11.8 14.2 11.8 H8.4 Z M12 0.8 V4.4 H15.6" fill="none" stroke="#333" stroke-width="1.25" stroke-linejoin="round"/></svg>
<svg class="abs" style="left:1032.5px;top:79.5px;" width="15" height="15" viewBox="0 0 15 15"><circle cx="6" cy="6" r="5.1" fill="none" stroke="#333" stroke-width="1.25"/><path d="M9.8 9.8 L14 14" stroke="#333" stroke-width="1.3" stroke-linecap="round"/></svg>
<div class="abs" style="left:1060px;top:78.5px;width:1px;height:15px;background:#bdbdbd;"></div>
<svg class="abs" style="left:1074px;top:79.5px;" width="16" height="15" viewBox="0 0 16 15"><path d="M3.6 4 V1.8 Q3.6 0.8 4.6 0.8 H11.4 Q12.4 0.8 12.4 1.8 V4 M3.6 10.6 H2.4 Q0.8 10.6 0.8 9 V5.8 Q0.8 4.2 2.4 4.2 H13.6 Q15.2 4.2 15.2 5.8 V9 Q15.2 10.6 13.6 10.6 H12.4 M3.6 8 H12.4 V12.6 Q12.4 13.8 11.2 13.8 H4.8 Q3.6 13.8 3.6 12.6 Z" fill="none" stroke="#333" stroke-width="1.25" stroke-linejoin="round"/></svg>
<svg class="abs" style="left:1108px;top:79.5px;" width="15" height="15" viewBox="0 0 15 15"><path d="M0.8 2.2 Q0.8 0.8 2.2 0.8 H10.6 L13.8 4 V12.4 Q13.8 13.8 12.4 13.8 H2.2 Q0.8 13.8 0.8 12.4 Z M3.6 0.8 V4.6 H9.6 V0.8 M3.4 13.8 V8.6 H11.2 V13.8" fill="none" stroke="#cfcfcf" stroke-width="1.2" stroke-linejoin="round"/></svg>
<svg class="abs" style="left:1140.5px;top:79px;" width="17" height="16" viewBox="0 0 17 16"><path d="M8 14.2 H2.2 Q0.8 14.2 0.8 12.8 V2.6 Q0.8 1.2 2.2 1.2 H10.6 L13.8 4.4 V6.6 M3.6 1.2 V5 H9.6 V1.2 M3.4 14.2 V9 H9" fill="none" stroke="#222" stroke-width="1.3" stroke-linejoin="round"/><path d="M8.6 15.6 L9.2 12.8 L14 8 L16 10 L11.2 14.8 Z" fill="#222"/></svg>
<div class="abs" style="left:1168px;top:78.5px;width:1px;height:15px;background:#bdbdbd;"></div>
<svg class="abs" style="left:1182px;top:79.5px;" width="15" height="15" viewBox="0 0 15 15"><path d="M1 14 L14 1 M8.6 1 H14 V6.4 M1 8.6 V14 H6.4" fill="none" stroke="#333" stroke-width="1.25" stroke-linecap="round" stroke-linejoin="round"/></svg>
<svg class="abs" style="left:1214px;top:78px;" width="17" height="17" viewBox="0 0 17 17"><g transform="translate(8.4 8.2)"><path d="M-1.68 -5.45 L-1.30 -7.59 L1.30 -7.59 L1.68 -5.45 L3.87 -4.18 L5.92 -4.92 L7.22 -2.67 L5.56 -1.26 L5.56 1.26 L7.22 2.67 L5.92 4.92 L3.87 4.18 L1.68 5.45 L1.30 7.59 L-1.30 7.59 L-1.68 5.45 L-3.87 4.18 L-5.92 4.92 L-7.22 2.67 L-5.56 1.26 L-5.56 -1.26 L-7.22 -2.67 L-5.92 -4.92 L-3.87 -4.18 Z" fill="none" stroke="#2a2a2a" stroke-width="1.25" stroke-linejoin="round"/><circle r="2.3" fill="none" stroke="#2a2a2a" stroke-width="1.2"/></g></svg>
<div class="abs" style="left:4px;top:105.19999999999999px;width:1239px;height:567px;background:#e6e6e6;"></div>
<div class="abs" style="left:1243px;top:72px;width:13px;height:600px;background:#f8f8f9;"></div>
<svg class="abs" style="left:1244.5px;top:77px;" width="10" height="6" viewBox="0 0 10 6"><path d="M0 6 L5 0 L10 6Z" fill="#8f8f8f"/></svg>
<svg class="abs" style="left:1245px;top:653.5px;" width="9" height="6" viewBox="0 0 9 6"><path d="M0 0 L4.5 6 L9 0Z" fill="#8f8f8f"/></svg>
<div class="abs" style="left:1246px;top:188.5px;width:7px;height:59px;background:#8c8c8c;border-radius:4px;"></div>
<div id="pdfclip" class="abs" style="left:4px;top:105.2px;width:1239px;height:566.8px;overflow:hidden">
<div class="abs" style="left:177px;top:-9.2px;width:884.2px;height:20.3px;background:#f6f1eb;box-shadow:0 1px 3px rgba(0,0,0,0.28);"></div>
<div class="abs" style="left:177px;top:18.6px;width:884.2px;height:497.4px;background:#f6f1eb;box-shadow:0 1px 4px rgba(0,0,0,0.30);"></div>
<svg class="abs" style="left:177px;top:18.8px;" width="885" height="497" viewBox="0 0 885 497"><g fill="#e9c4cc"><circle cx="4.3" cy="9.5" r="1.30"/><circle cx="19.0" cy="9.5" r="1.47"/><circle cx="33.6" cy="9.5" r="1.64"/><circle cx="48.3" cy="9.5" r="1.81"/><circle cx="63.0" cy="9.5" r="1.98"/><circle cx="77.6" cy="9.5" r="2.15"/><circle cx="92.3" cy="9.5" r="2.32"/><circle cx="107.0" cy="9.5" r="2.49"/><circle cx="121.7" cy="9.5" r="2.66"/><circle cx="136.3" cy="9.5" r="2.83"/><circle cx="151.0" cy="9.5" r="3.00"/><circle cx="165.7" cy="9.5" r="3.17"/><circle cx="180.3" cy="9.5" r="3.34"/><circle cx="195.0" cy="9.5" r="3.51"/><circle cx="209.7" cy="9.5" r="3.68"/><circle cx="224.4" cy="9.5" r="2.50"/><circle cx="4.3" cy="24.2" r="1.30"/><circle cx="19.0" cy="24.2" r="1.47"/><circle cx="33.6" cy="24.2" r="1.64"/><circle cx="48.3" cy="24.2" r="1.81"/><circle cx="63.0" cy="24.2" r="1.98"/><circle cx="77.6" cy="24.2" r="2.15"/><circle cx="92.3" cy="24.2" r="2.32"/><circle cx="107.0" cy="24.2" r="2.49"/><circle cx="121.7" cy="24.2" r="2.66"/><circle cx="136.3" cy="24.2" r="2.83"/><circle cx="151.0" cy="24.2" r="3.00"/><circle cx="165.7" cy="24.2" r="3.17"/><circle cx="180.3" cy="24.2" r="3.34"/><circle cx="195.0" cy="24.2" r="3.51"/><circle cx="209.7" cy="24.2" r="3.68"/><circle cx="224.4" cy="24.2" r="1.70"/><circle cx="4.3" cy="38.8" r="1.30"/><circle cx="19.0" cy="38.8" r="1.47"/><circle cx="33.6" cy="38.8" r="1.64"/><circle cx="48.3" cy="38.8" r="1.81"/><circle cx="63.0" cy="38.8" r="1.98"/><circle cx="77.6" cy="38.8" r="2.15"/><circle cx="92.3" cy="38.8" r="2.32"/><circle cx="107.0" cy="38.8" r="2.49"/><circle cx="121.7" cy="38.8" r="2.66"/><circle cx="136.3" cy="38.8" r="2.83"/><circle cx="151.0" cy="38.8" r="3.00"/><circle cx="165.7" cy="38.8" r="3.17"/><circle cx="180.3" cy="38.8" r="3.34"/><circle cx="195.0" cy="38.8" r="3.51"/><circle cx="209.7" cy="38.8" r="3.68"/><circle cx="224.4" cy="38.8" r="0.35"/><circle cx="4.3" cy="53.5" r="1.30"/><circle cx="19.0" cy="53.5" r="1.47"/><circle cx="33.6" cy="53.5" r="1.64"/><circle cx="48.3" cy="53.5" r="1.81"/><circle cx="63.0" cy="53.5" r="1.98"/><circle cx="77.6" cy="53.5" r="2.15"/><circle cx="92.3" cy="53.5" r="2.32"/><circle cx="107.0" cy="53.5" r="2.49"/><circle cx="121.7" cy="53.5" r="2.66"/><circle cx="136.3" cy="53.5" r="2.83"/><circle cx="151.0" cy="53.5" r="3.00"/><circle cx="165.7" cy="53.5" r="3.17"/><circle cx="180.3" cy="53.5" r="3.34"/><circle cx="195.0" cy="53.5" r="2.20"/><circle cx="209.7" cy="53.5" r="0.35"/><circle cx="4.3" cy="68.2" r="1.30"/><circle cx="19.0" cy="68.2" r="1.47"/><circle cx="33.6" cy="68.2" r="1.64"/><circle cx="48.3" cy="68.2" r="1.81"/><circle cx="63.0" cy="68.2" r="1.98"/><circle cx="77.6" cy="68.2" r="2.15"/><circle cx="92.3" cy="68.2" r="2.32"/><circle cx="107.0" cy="68.2" r="2.49"/><circle cx="121.7" cy="68.2" r="2.66"/><circle cx="136.3" cy="68.2" r="2.83"/><circle cx="151.0" cy="68.2" r="3.00"/><circle cx="165.7" cy="68.2" r="1.50"/><circle cx="180.3" cy="68.2" r="0.40"/><circle cx="4.3" cy="82.9" r="0.70"/><circle cx="19.0" cy="82.9" r="0.80"/><circle cx="33.6" cy="82.9" r="0.85"/><circle cx="48.3" cy="82.9" r="0.80"/><circle cx="63.0" cy="82.9" r="0.80"/><circle cx="77.6" cy="82.9" r="0.75"/><circle cx="92.3" cy="82.9" r="0.65"/><circle cx="107.0" cy="82.9" r="0.50"/><circle cx="121.7" cy="82.9" r="0.30"/></g><g fill="#ecc4cc"><circle cx="871.5" cy="301.8" r="0.90"/><circle cx="856.8" cy="301.8" r="0.50"/><circle cx="871.5" cy="316.5" r="1.90"/><circle cx="856.8" cy="316.5" r="1.82"/><circle cx="842.1" cy="316.5" r="1.74"/><circle cx="827.5" cy="316.5" r="1.66"/><circle cx="812.8" cy="316.5" r="1.58"/><circle cx="798.1" cy="316.5" r="1.50"/><circle cx="783.4" cy="316.5" r="1.35"/><circle cx="768.7" cy="316.5" r="1.10"/><circle cx="754.1" cy="316.5" r="0.80"/><circle cx="739.4" cy="316.5" r="0.55"/><circle cx="871.5" cy="331.2" r="1.90"/><circle cx="856.8" cy="331.2" r="1.82"/><circle cx="842.1" cy="331.2" r="1.74"/><circle cx="827.5" cy="331.2" r="1.66"/><circle cx="812.8" cy="331.2" r="1.58"/><circle cx="798.1" cy="331.2" r="1.50"/><circle cx="783.4" cy="331.2" r="1.35"/><circle cx="768.7" cy="331.2" r="1.10"/><circle cx="754.1" cy="331.2" r="0.80"/><circle cx="739.4" cy="331.2" r="0.55"/><circle cx="724.7" cy="331.2" r="0.40"/><circle cx="871.5" cy="345.8" r="1.90"/><circle cx="856.8" cy="345.8" r="1.82"/><circle cx="842.1" cy="345.8" r="1.74"/><circle cx="827.5" cy="345.8" r="1.66"/><circle cx="812.8" cy="345.8" r="1.58"/><circle cx="798.1" cy="345.8" r="1.50"/><circle cx="783.4" cy="345.8" r="1.35"/><circle cx="768.7" cy="345.8" r="1.10"/><circle cx="754.1" cy="345.8" r="0.80"/><circle cx="739.4" cy="345.8" r="0.55"/><circle cx="724.7" cy="345.8" r="0.40"/><circle cx="871.5" cy="360.5" r="1.90"/><circle cx="856.8" cy="360.5" r="1.82"/><circle cx="842.1" cy="360.5" r="1.74"/><circle cx="827.5" cy="360.5" r="1.66"/><circle cx="812.8" cy="360.5" r="1.58"/><circle cx="798.1" cy="360.5" r="1.50"/><circle cx="783.4" cy="360.5" r="1.35"/><circle cx="768.7" cy="360.5" r="1.10"/><circle cx="754.1" cy="360.5" r="0.80"/><circle cx="739.4" cy="360.5" r="0.55"/><circle cx="724.7" cy="360.5" r="0.40"/><circle cx="871.5" cy="375.2" r="1.90"/><circle cx="856.8" cy="375.2" r="1.82"/><circle cx="842.1" cy="375.2" r="1.74"/><circle cx="827.5" cy="375.2" r="1.66"/><circle cx="812.8" cy="375.2" r="1.58"/><circle cx="798.1" cy="375.2" r="1.50"/><circle cx="783.4" cy="375.2" r="1.35"/><circle cx="768.7" cy="375.2" r="1.10"/><circle cx="754.1" cy="375.2" r="0.80"/><circle cx="739.4" cy="375.2" r="0.55"/><circle cx="724.7" cy="375.2" r="0.40"/><circle cx="710.0" cy="375.2" r="0.30"/><circle cx="871.5" cy="389.9" r="1.90"/><circle cx="856.8" cy="389.9" r="1.82"/><circle cx="842.1" cy="389.9" r="1.74"/><circle cx="827.5" cy="389.9" r="1.66"/><circle cx="812.8" cy="389.9" r="1.58"/><circle cx="798.1" cy="389.9" r="1.50"/><circle cx="783.4" cy="389.9" r="1.35"/><circle cx="768.7" cy="389.9" r="1.10"/><circle cx="754.1" cy="389.9" r="0.80"/><circle cx="739.4" cy="389.9" r="0.55"/><circle cx="724.7" cy="389.9" r="0.40"/><circle cx="710.0" cy="389.9" r="0.30"/><circle cx="871.5" cy="404.6" r="1.90"/><circle cx="856.8" cy="404.6" r="1.82"/><circle cx="842.1" cy="404.6" r="1.74"/><circle cx="827.5" cy="404.6" r="1.66"/><circle cx="812.8" cy="404.6" r="1.58"/><circle cx="798.1" cy="404.6" r="1.50"/><circle cx="783.4" cy="404.6" r="1.35"/><circle cx="768.7" cy="404.6" r="1.10"/><circle cx="754.1" cy="404.6" r="0.80"/><circle cx="739.4" cy="404.6" r="0.55"/><circle cx="724.7" cy="404.6" r="0.40"/><circle cx="871.5" cy="419.2" r="0.70"/><circle cx="856.8" cy="419.2" r="0.70"/><circle cx="842.1" cy="419.2" r="0.65"/><circle cx="827.5" cy="419.2" r="0.60"/><circle cx="812.8" cy="419.2" r="0.55"/><circle cx="798.1" cy="419.2" r="0.50"/><circle cx="783.4" cy="419.2" r="0.40"/><circle cx="768.7" cy="419.2" r="0.30"/></g></svg>
<div class="abs" style="left:947.7px;top:18.6px;width:70px;height:81.4px;background:#a3c2d3;border-radius:0 0 35px 35px;"></div>
<div class="t" style="left:973.30px;top:41.87px;font-size:35px;font-weight:bold;color:#111;transform:scaleX(0.9453);transform-origin:0 0;word-spacing:0.000px;">2</div>
<div class="t" style="left:470.00px;top:42.63px;font-size:51px;font-weight:bold;color:#0a0a0a;transform:scaleX(0.8527);transform-origin:0 0;word-spacing:0.000px;">PPK ORMAWA</div>
<div class="t" style="left:256.00px;top:134.71px;font-size:17px;font-weight:bold;color:#151515;transform:scaleX(0.9150);transform-origin:0 0;word-spacing:-0.310px;">PPK Ormawa merupakan salah satu implementasi dari kebijakan Kemendikbudristek, sebab mahasiswa</div>
<div class="t" style="left:256.00px;top:158.71px;font-size:17px;font-weight:bold;color:#151515;transform:scaleX(0.9150);transform-origin:0 0;word-spacing:3.651px;">dapat berlatih menjadi pemimpin transformasional dalam menyelesaikan berbagai permasalahan di</div>
<div class="t" style="left:256.00px;top:182.71px;font-size:17px;font-weight:bold;color:#151515;transform:scaleX(0.9156);transform-origin:0 0;word-spacing:0.000px;">masyarakat.</div>
<div class="t" style="left:256.00px;top:206.71px;font-size:17px;font-weight:bold;color:#151515;transform:scaleX(0.9150);transform-origin:0 0;word-spacing:2.906px;">PPK Ormawa adalah program penguatan kapasitas Ormawa melalui serangkaian proses pembinaan</div>
<div class="t" style="left:256.00px;top:230.71px;font-size:17px;font-weight:bold;color:#151515;transform:scaleX(0.9143);transform-origin:0 0;word-spacing:0.000px;">Ormawa oleh PT yang diimplementasikan dalam program pengabdian dan pemberdayaan masyarakat.</div>
<div class="t" style="left:256.00px;top:254.71px;font-size:17px;font-weight:bold;color:#151515;transform:scaleX(0.9150);transform-origin:0 0;word-spacing:1.274px;">Proposal yang diajukan oleh PT merupakan kumpulan dari berbagai gagasan/ide/usulan kegiatan dari</div>
<div class="t" style="left:256.00px;top:278.71px;font-size:17px;font-weight:bold;color:#151515;transform:scaleX(0.9150);transform-origin:0 0;word-spacing:0.927px;">satu atau lebih Ormawa. Gagasan/usulan kegiatan merupakan bentuk pengabdian atau pemberdayaan</div>
<div class="t" style="left:256.00px;top:302.71px;font-size:17px;font-weight:bold;color:#151515;transform:scaleX(0.9150);transform-origin:0 0;word-spacing:2.187px;">masyarakat yang disusun oleh organisasi kemahasiswaan resmi yang ada di perguruan tinggi, yang</div>
<div class="t" style="left:256.00px;top:326.71px;font-size:17px;font-weight:bold;color:#151515;transform:scaleX(0.9215);transform-origin:0 0;word-spacing:0.000px;">dapat diimplementasikan dalam berbagai program sesuai dengan topik yang dipilih.</div>
<div class="t" style="left:256.00px;top:350.71px;font-size:17px;font-weight:bold;color:#151515;transform:scaleX(0.9150);transform-origin:0 0;word-spacing:2.280px;">Topik yang dipilih sesuai dengan permasalahan, potensi, dan kebutuhan masyarakat desa/kelurahan</div>
<div class="t" style="left:256.00px;top:374.71px;font-size:17px;font-weight:bold;color:#151515;transform:scaleX(0.9019);transform-origin:0 0;word-spacing:0.000px;">yang disusun dalam subproposal sebagai lampiran proposal usulan masing-masing PT.</div>
<div class="abs" style="left:240.5px;top:140.0px;width:6.1px;height:6.1px;background:#111;border-radius:50%;"></div>
<div class="abs" style="left:240.5px;top:212.0px;width:6.1px;height:6.1px;background:#111;border-radius:50%;"></div>
<div class="abs" style="left:240.5px;top:260.0px;width:6.1px;height:6.1px;background:#111;border-radius:50%;"></div>
<div class="abs" style="left:240.5px;top:356.0px;width:6.1px;height:6.1px;background:#111;border-radius:50%;"></div>
<div class="abs" style="left:177px;top:455.1px;width:331.3px;height:6.4px;background:#a3c2d3;"></div>
<div class="abs" style="left:730px;top:455.1px;width:331.2px;height:6.4px;background:#a3c2d3;"></div>
<div class="t" style="left:517.70px;top:449.71px;font-size:17px;font-weight:bold;color:#151515;transform:scaleX(0.8639);transform-origin:0 0;word-spacing:0.000px;">Universitas Hang Tuah | 2024</div>
<div class="abs" style="left:177px;top:524.1px;width:884.2px;height:60px;background:#f6f1eb;box-shadow:0 0 3px rgba(0,0,0,0.25);"></div>
<div class="abs" style="left:228.3px;top:524.1px;width:4.2px;height:60px;background:#a3c2d3;"></div>
<svg class="abs" style="left:177px;top:523.8px;" width="885" height="44" viewBox="0 0 885 44"><g fill="#ecc9d0"><circle cx="407.3" cy="0.0" r="0.35"/><circle cx="422.0" cy="0.0" r="0.50"/><circle cx="436.7" cy="0.0" r="0.65"/><circle cx="451.3" cy="0.0" r="0.81"/><circle cx="466.0" cy="0.0" r="0.96"/><circle cx="480.7" cy="0.0" r="1.11"/><circle cx="495.4" cy="0.0" r="1.26"/><circle cx="510.1" cy="0.0" r="1.41"/><circle cx="524.7" cy="0.0" r="1.57"/><circle cx="539.4" cy="0.0" r="1.72"/><circle cx="554.1" cy="0.0" r="1.87"/><circle cx="568.8" cy="0.0" r="2.02"/><circle cx="583.5" cy="0.0" r="2.17"/><circle cx="598.1" cy="0.0" r="2.33"/><circle cx="612.8" cy="0.0" r="2.48"/><circle cx="627.5" cy="0.0" r="2.63"/><circle cx="642.2" cy="0.0" r="2.78"/><circle cx="656.9" cy="0.0" r="2.93"/><circle cx="671.5" cy="0.0" r="3.09"/><circle cx="686.2" cy="0.0" r="2.96"/><circle cx="700.9" cy="0.0" r="1.66"/><circle cx="407.3" cy="13.6" r="0.35"/><circle cx="422.0" cy="13.6" r="0.50"/><circle cx="436.7" cy="13.6" r="0.65"/><circle cx="451.3" cy="13.6" r="0.81"/><circle cx="466.0" cy="13.6" r="0.96"/><circle cx="480.7" cy="13.6" r="1.11"/><circle cx="495.4" cy="13.6" r="1.26"/><circle cx="510.1" cy="13.6" r="1.41"/><circle cx="524.7" cy="13.6" r="1.57"/><circle cx="539.4" cy="13.6" r="1.72"/><circle cx="554.1" cy="13.6" r="1.87"/><circle cx="568.8" cy="13.6" r="2.02"/><circle cx="583.5" cy="13.6" r="2.17"/><circle cx="598.1" cy="13.6" r="2.33"/><circle cx="612.8" cy="13.6" r="2.48"/><circle cx="627.5" cy="13.6" r="2.63"/><circle cx="642.2" cy="13.6" r="2.78"/><circle cx="656.9" cy="13.6" r="2.93"/><circle cx="671.5" cy="13.6" r="3.09"/><circle cx="686.2" cy="13.6" r="2.14"/><circle cx="700.9" cy="13.6" r="0.79"/><circle cx="407.3" cy="28.5" r="0.35"/><circle cx="422.0" cy="28.5" r="0.50"/><circle cx="436.7" cy="28.5" r="0.65"/><circle cx="451.3" cy="28.5" r="0.81"/><circle cx="466.0" cy="28.5" r="0.96"/><circle cx="480.7" cy="28.5" r="1.11"/><circle cx="495.4" cy="28.5" r="1.26"/><circle cx="510.1" cy="28.5" r="1.41"/><circle cx="524.7" cy="28.5" r="1.57"/><circle cx="539.4" cy="28.5" r="1.72"/><circle cx="554.1" cy="28.5" r="1.87"/><circle cx="568.8" cy="28.5" r="2.02"/><circle cx="583.5" cy="28.5" r="2.17"/><circle cx="598.1" cy="28.5" r="2.33"/><circle cx="612.8" cy="28.5" r="2.48"/><circle cx="627.5" cy="28.5" r="2.63"/><circle cx="642.2" cy="28.5" r="2.43"/><circle cx="656.9" cy="28.5" r="1.31"/></g></svg>
<div class="abs" style="left:947.7px;top:524.1px;width:70px;height:60px;background:#a3c2d3;"></div>
<div class="t" style="left:973.00px;top:548.17px;font-size:35px;font-weight:bold;color:#111;transform:scaleX(0.9761);transform-origin:0 0;word-spacing:0.000px;">3</div>
</div>
<div class="abs" style="left:0px;top:668.4px;width:1260px;height:4px;background:#f3f3f4;"></div>
<div class="abs" style="left:4px;top:104.69999999999999px;width:1239px;height:1.4px;background:#c6c6c8;"></div>
<svg class="abs" style="left:1111.5px;top:581px;" width="13" height="20" viewBox="0 0 13 20"><path d="M0.8 0.8 V15.6 L4.4 12.2 L7 18.4 L9.4 17.4 L6.8 11.4 H11.6 Z" fill="#fff" stroke="#111" stroke-width="1" stroke-linejoin="round"/></svg>
</div>
<div class="abs" style="left:1271px;top:525px;width:1.2px;height:25px;background:#bdbdbd;"></div>
<div class="abs" style="left:1273.5px;top:525px;width:1.2px;height:25px;background:#bdbdbd;"></div>
<div class="abs" style="left:1402.5px;top:71px;width:73px;height:36px;background:#0a0a0a;border-radius:3px;"></div>
<svg class="abs" style="left:1431.5px;top:83.5px;" width="15" height="9" viewBox="0 0 15 9"><path d="M1 8 L7.5 1.5 L14 8" fill="none" stroke="#8c8c9c" stroke-width="1.7"/></svg>
<div class="abs" style="left:1402.5px;top:911px;width:73px;height:37.5px;background:#0a0a0a;border-radius:3px;"></div>
<svg class="abs" style="left:1431.5px;top:927.5px;" width="15" height="9" viewBox="0 0 15 9"><path d="M1 1 L7.5 7.5 L14 1" fill="none" stroke="#8c8c9c" stroke-width="1.7"/></svg>
<div class="abs" style="left:1278.8px;top:105px;width:320.4px;height:808px;background:#222222;border-radius:7px;overflow:hidden">
<div class="t" style="left:38.85px;top:36.96px;font-size:15.4px;color:#fff;letter-spacing:-0.342px;font-weight:bold;">Dayu santhi</div>
<div class="abs" style="left:204.8px;top:9.3px;width:71.6px;height:71.8px;border-radius:6px;background:#c4390d;overflow:hidden;"><div class="abs" style="left:0;top:16.16px;width:71.6px;text-align:center;font-size:40.8px;line-height:1;color:#fff;-webkit-text-stroke:0.4px #fff">i</div></div>
<div class="abs" style="left:45.0px;top:99.3px;width:71.6px;height:71.8px;border-radius:6px;background:#0097a7;overflow:hidden;"><div class="abs" style="left:0;top:12.16px;width:71.6px;text-align:center;font-size:40.8px;line-height:1;color:#fff;-webkit-text-stroke:0.4px #fff">a</div></div>
<div class="t" style="left:202.15px;top:126.96px;font-size:15.4px;color:#fff;letter-spacing:-0.155px;font-weight:bold;">Aya _fkuht</div>
<div class="t" style="left:60.80px;top:216.96px;font-size:15.4px;color:#fff;letter-spacing:-0.111px;font-weight:bold;">ilham</div>
<div class="abs" style="left:204.8px;top:189.3px;width:71.6px;height:71.8px;border-radius:6px;background:#ffdbe2;overflow:hidden;"><div class="abs" style="left:5px;top:4.0px;font-size:5.5px;line-height:6px;font-weight:bold;color:#f29bb0;letter-spacing:0">IF</div><div class="abs" style="left:5px;top:14.4px;font-size:5.5px;line-height:6px;font-weight:bold;color:#f29bb0;letter-spacing:0">YOU</div><div class="abs" style="left:5px;top:24.8px;font-size:5.5px;line-height:6px;font-weight:bold;color:#f29bb0;letter-spacing:0">NEVER</div><div class="abs" style="left:5px;top:35.2px;font-size:5.5px;line-height:6px;font-weight:bold;color:#f29bb0;letter-spacing:0">TRY</div><div class="abs" style="left:5px;top:45.6px;font-size:5.5px;line-height:6px;font-weight:bold;color:#f29bb0;letter-spacing:0">YOU'LL</div><div class="abs" style="left:5px;top:56.0px;font-size:5.5px;line-height:6px;font-weight:bold;color:#f29bb0;letter-spacing:0">NEVER</div><div class="abs" style="left:5px;top:66.4px;font-size:5.5px;line-height:6px;font-weight:bold;color:#f29bb0;letter-spacing:0">KNOW</div></div>
<div class="t" style="left:61.65px;top:306.96px;font-size:15.4px;color:#fff;letter-spacing:0.272px;font-weight:bold;">Nirro</div>
<div class="abs" style="left:204.8px;top:279.3px;width:71.6px;height:71.8px;border-radius:6px;background:#0059a4;overflow:hidden;"><div class="abs" style="left:0;top:15.41px;width:71.6px;text-align:center;font-size:40.8px;line-height:1;color:#fff;-webkit-text-stroke:0.4px #fff">P</div></div>
<div class="abs" style="left:45.0px;top:369.3px;width:71.6px;height:71.8px;border-radius:6px;background:#ece5d4;overflow:hidden;"><div class="abs" style="left:0px;top:0px;width:72px;height:72px;background:radial-gradient(ellipse at 55% 35%,#f6f1e7 0,#efe9da 60%,#e8e1cf 100%);"></div><div class="abs" style="left:4.3px;top:19.4px;width:31.6px;height:39.6px;background:linear-gradient(180deg,#b9b58a 0%,#c9c8a2 18%,#a9b39a 34%,#8d8a66 48%,#7a3a26 62%,#5a2a1e 78%,#2c2a22 92%,#3a2a22 100%);box-shadow:1px 1px 2px rgba(0,0,0,.25);"></div><div class="abs" style="left:21px;top:24px;width:13px;height:22px;background:linear-gradient(180deg,#c9d3c0,#a9c2b4 60%,rgba(0,0,0,0));opacity:.85;"></div><div class="abs" style="left:5px;top:22px;width:8px;height:14px;background:#2e2c22;opacity:.75;"></div><div class="abs" style="left:16px;top:20.5px;width:5px;height:7px;background:#24241c;opacity:.8;"></div><div class="abs" style="left:10px;top:36px;width:16px;height:5px;background:#d9cfae;opacity:.8;transform:rotate(-8deg);"></div><div class="abs" style="left:12px;top:44px;width:14px;height:4px;background:#e2d8b8;opacity:.75;transform:rotate(-8deg);"></div><div class="abs" style="left:8px;top:40px;width:4px;height:18px;background:#6a2a1a;opacity:.85;transform:rotate(14deg);"></div><div class="abs" style="left:14px;top:52px;width:14px;height:6px;background:#1c1c18;opacity:.8;"></div><div class="abs" style="left:53px;top:36.6px;width:15.8px;height:11px;background:#e6e4df;box-shadow:0 0 1px #aaa;"></div><div class="abs" style="left:54.5px;top:38.5px;width:8px;height:1px;background:#9a9a96;"></div><div class="abs" style="left:54.5px;top:41px;width:6px;height:0.8px;background:#b0b0ac;"></div><div class="abs" style="left:54.5px;top:44px;width:9px;height:0.8px;background:#b8b8b4;"></div></div>
<div class="t" style="left:189.85px;top:396.96px;font-size:15.4px;color:#fff;letter-spacing:-0.642px;font-weight:bold;">Silvia Salsabila</div>
<div class="t" style="left:54.45px;top:486.96px;font-size:15.4px;color:#fff;letter-spacing:-0.623px;font-weight:bold;">Charisa</div>
<div class="t" style="left:193.75px;top:486.96px;font-size:15.4px;color:#fff;letter-spacing:-0.355px;font-weight:bold;">Yashinta_094</div>
<div class="t" style="left:46.55px;top:576.96px;font-size:15.4px;color:#fff;letter-spacing:-0.428px;font-weight:bold;">Firda_093</div>
<div class="abs" style="left:204.8px;top:549.3px;width:71.6px;height:71.8px;border-radius:6px;background:#f4511e;overflow:hidden;"><div class="abs" style="left:0;top:12.36px;width:71.6px;text-align:center;font-size:40.8px;line-height:1;color:#fff;-webkit-text-stroke:0.4px #fff">n</div></div>
<div class="abs" style="left:45.0px;top:639.3px;width:71.6px;height:71.8px;border-radius:6px;background:#ffffff;overflow:hidden;"></div>
<div class="t" style="left:217.75px;top:666.96px;font-size:15.4px;color:#fff;letter-spacing:-0.170px;font-weight:bold;">agung</div>
<div class="abs" style="left:45.0px;top:729.3px;width:71.6px;height:71.8px;border-radius:6px;background:#7e57c2;overflow:hidden;"><div class="abs" style="left:0;top:12.36px;width:71.6px;text-align:center;font-size:40.8px;line-height:1;color:#fff;-webkit-text-stroke:0.4px #fff">r</div></div>
<div class="abs" style="left:204.8px;top:729.3px;width:71.6px;height:71.8px;border-radius:6px;background:#dfe8ee;overflow:hidden;"><div class="abs" style="left:0px;top:0px;width:72px;height:72px;background:linear-gradient(90deg,#fdfdfd 0 13%,#eaf0f3 13% 72%,#29a6d6 72% 84%,#f3f6f8 84% 100%);"></div><div class="abs" style="left:0px;top:0px;width:52px;height:5px;background:#f4f6f7;"></div><div class="abs" style="left:11.5px;top:8px;width:2.2px;height:38px;background:#2a47a5;"></div><div class="abs" style="left:16.5px;top:10px;width:1.8px;height:34px;background:#3553b0;"></div><div class="abs" style="left:20.5px;top:11px;width:1.6px;height:30px;background:#2a47a5;"></div><div class="abs" style="left:13.5px;top:12px;width:3px;height:30px;background:#8a96a8;opacity:.6;"></div><div class="abs" style="left:22px;top:2px;width:9.5px;height:13px;background:linear-gradient(180deg,#9aa3a3,#c2c8c6);border:0.5px solid #7d8686;"></div><div class="abs" style="left:31px;top:13px;width:21px;height:20px;background:linear-gradient(180deg,#7e9aa0,#5f7d86 60%,#9db1b5);"></div><div class="abs" style="left:31px;top:20.5px;width:21px;height:1px;background:#e9eef0;"></div><div class="abs" style="left:39px;top:13px;width:1px;height:20px;background:#e9eef0;"></div><div class="abs" style="left:62px;top:13px;width:4.5px;height:5px;background:#1f3f9a;"></div><div class="abs" style="left:61.5px;top:19px;width:5px;height:21px;background:#8b5a3c;"></div><div class="abs" style="left:54px;top:37px;width:18px;height:1.6px;background:#2fa3d3;"></div><div class="abs" style="left:58px;top:42px;width:14px;height:1.4px;background:#2fa3d3;"></div><div class="abs" style="left:61px;top:47px;width:11px;height:1.4px;background:#2fa3d3;"></div><div class="abs" style="left:63px;top:52px;width:9px;height:1.4px;background:#2fa3d3;"></div><div class="abs" style="left:56px;top:37px;width:2px;height:30px;background:#2fa3d3;transform:skewX(-18deg);"></div><div class="abs" style="left:38px;top:19px;width:14px;height:14px;background:#14100f;border-radius:50%;"></div><div class="abs" style="left:36px;top:24px;width:11.5px;height:14px;background:#c89478;border-radius:45%;"></div><div class="abs" style="left:22px;top:36px;width:34px;height:40px;background:#15151a;border-radius:14px 16px 4px 4px;"></div><div class="abs" style="left:15px;top:33px;width:12px;height:7px;background:#c89478;border-radius:4px;transform:rotate(-35deg);"></div><div class="abs" style="left:27px;top:28px;width:8px;height:5px;background:#c89478;border-radius:3px;transform:rotate(-50deg);"></div><div class="abs" style="left:52px;top:52px;width:7px;height:5px;background:#c89478;border-radius:3px;transform:rotate(30deg);"></div></div>
<div class="abs" style="left:3.2000000000000455px;top:68.80000000000001px;width:92.0px;height:18.8px;background:rgba(47,47,47,0.78);border-radius:5px;"></div><svg class="abs" style="left:5.7999999999999545px;top:71.20000000000002px;" width="14.0" height="14.0" viewBox="0 0 14 14"><rect x="3.7" y="1.4" width="6.6" height="8.8" rx="3.3" fill="#f2605f"/><path d="M2.8 7.6 Q2.8 11.4 7 11.4 Q11.2 11.4 11.2 7.6" fill="none" stroke="#f2605f" stroke-width="0.7" opacity="0.55"/><path d="M7 10 V12.4" stroke="#f2605f" stroke-width="1.6"/><path d="M4.4 12.9 H9.6" stroke="#f2605f" stroke-width="1.4"/><path d="M1.3 14.3 L13.7 0.9" stroke="#2c2c2c" stroke-width="2.4"/><path d="M0.5 13.7 L12.9 0.3" stroke="#f2605f" stroke-width="1.3"/></svg><div class="t" style="left:23.47px;top:71.63px;font-size:13.2px;color:#fff;letter-spacing:-0.172px;">Dayu santhi</div>
<div class="abs" style="left:163.5px;top:68.80000000000001px;width:98.4px;height:18.8px;background:rgba(47,47,47,0.78);border-radius:5px;"></div><svg class="abs" style="left:166.0999999999999px;top:71.20000000000002px;" width="14.0" height="14.0" viewBox="0 0 14 14"><rect x="3.7" y="1.4" width="6.6" height="8.8" rx="3.3" fill="#f2605f"/><path d="M2.8 7.6 Q2.8 11.4 7 11.4 Q11.2 11.4 11.2 7.6" fill="none" stroke="#f2605f" stroke-width="0.7" opacity="0.55"/><path d="M7 10 V12.4" stroke="#f2605f" stroke-width="1.6"/><path d="M4.4 12.9 H9.6" stroke="#f2605f" stroke-width="1.4"/><path d="M1.3 14.3 L13.7 0.9" stroke="#2c2c2c" stroke-width="2.4"/><path d="M0.5 13.7 L12.9 0.3" stroke="#f2605f" stroke-width="1.3"/></svg><div class="t" style="left:183.77px;top:71.63px;font-size:13.2px;color:#fff;letter-spacing:0.142px;">irfan shoope</div>
<div class="abs" style="left:3.2000000000000455px;top:158.8px;width:156.5px;height:18.8px;background:rgba(47,47,47,0.78);border-radius:5px;"></div><svg class="abs" style="left:5.7999999999999545px;top:161.2px;" width="14.0" height="14.0" viewBox="0 0 14 14"><rect x="3.7" y="1.4" width="6.6" height="8.8" rx="3.3" fill="#f2605f"/><path d="M2.8 7.6 Q2.8 11.4 7 11.4 Q11.2 11.4 11.2 7.6" fill="none" stroke="#f2605f" stroke-width="0.7" opacity="0.55"/><path d="M7 10 V12.4" stroke="#f2605f" stroke-width="1.6"/><path d="M4.4 12.9 H9.6" stroke="#f2605f" stroke-width="1.4"/><path d="M1.3 14.3 L13.7 0.9" stroke="#2c2c2c" stroke-width="2.4"/><path d="M0.5 13.7 L12.9 0.3" stroke="#f2605f" stroke-width="1.3"/></svg><div class="t" style="left:23.47px;top:161.63px;font-size:13.2px;color:#fff;letter-spacing:-0.451px;">20230430078_Amand...</div>
<div class="abs" style="left:163.5px;top:158.8px;width:82.9px;height:18.8px;background:rgba(47,47,47,0.78);border-radius:5px;"></div><svg class="abs" style="left:166.0999999999999px;top:161.2px;" width="14.0" height="14.0" viewBox="0 0 14 14"><rect x="3.7" y="1.4" width="6.6" height="8.8" rx="3.3" fill="#f2605f"/><path d="M2.8 7.6 Q2.8 11.4 7 11.4 Q11.2 11.4 11.2 7.6" fill="none" stroke="#f2605f" stroke-width="0.7" opacity="0.55"/><path d="M7 10 V12.4" stroke="#f2605f" stroke-width="1.6"/><path d="M4.4 12.9 H9.6" stroke="#f2605f" stroke-width="1.4"/><path d="M1.3 14.3 L13.7 0.9" stroke="#2c2c2c" stroke-width="2.4"/><path d="M0.5 13.7 L12.9 0.3" stroke="#f2605f" stroke-width="1.3"/></svg><div class="t" style="left:183.77px;top:161.63px;font-size:13.2px;color:#fff;letter-spacing:-0.348px;">Aya _fkuht</div>
<div class="abs" style="left:3.2000000000000455px;top:248.8px;width:56.0px;height:18.8px;background:rgba(47,47,47,0.78);border-radius:5px;"></div><svg class="abs" style="left:5.7999999999999545px;top:251.2px;" width="14.0" height="14.0" viewBox="0 0 14 14"><rect x="3.7" y="1.4" width="6.6" height="8.8" rx="3.3" fill="#f2605f"/><path d="M2.8 7.6 Q2.8 11.4 7 11.4 Q11.2 11.4 11.2 7.6" fill="none" stroke="#f2605f" stroke-width="0.7" opacity="0.55"/><path d="M7 10 V12.4" stroke="#f2605f" stroke-width="1.6"/><path d="M4.4 12.9 H9.6" stroke="#f2605f" stroke-width="1.4"/><path d="M1.3 14.3 L13.7 0.9" stroke="#2c2c2c" stroke-width="2.4"/><path d="M0.5 13.7 L12.9 0.3" stroke="#f2605f" stroke-width="1.3"/></svg><div class="t" style="left:23.47px;top:251.63px;font-size:13.2px;color:#fff;letter-spacing:0.111px;">ilham</div>
<div class="abs" style="left:163.5px;top:248.8px;width:141.1px;height:18.8px;background:rgba(47,47,47,0.78);border-radius:5px;"></div><svg class="abs" style="left:166.0999999999999px;top:251.2px;" width="14.0" height="14.0" viewBox="0 0 14 14"><rect x="3.7" y="1.4" width="6.6" height="8.8" rx="3.3" fill="#f2605f"/><path d="M2.8 7.6 Q2.8 11.4 7 11.4 Q11.2 11.4 11.2 7.6" fill="none" stroke="#f2605f" stroke-width="0.7" opacity="0.55"/><path d="M7 10 V12.4" stroke="#f2605f" stroke-width="1.6"/><path d="M4.4 12.9 H9.6" stroke="#f2605f" stroke-width="1.4"/><path d="M1.3 14.3 L13.7 0.9" stroke="#2c2c2c" stroke-width="2.4"/><path d="M0.5 13.7 L12.9 0.3" stroke="#f2605f" stroke-width="1.3"/></svg><div class="t" style="left:183.77px;top:251.63px;font-size:13.2px;color:#fff;letter-spacing:-0.540px;">22_020_Rahma Aulia</div>
<div class="abs" style="left:3.2000000000000455px;top:338.8px;width:37.8px;height:18.8px;background:rgba(47,47,47,0.78);border-radius:5px;"></div><div class="t" style="left:5.67px;top:341.63px;font-size:13.2px;color:#fff;letter-spacing:0.679px;">Nirro</div>
<div class="abs" style="left:163.5px;top:338.8px;width:157.2px;height:18.8px;background:rgba(47,47,47,0.78);border-radius:5px;"></div><svg class="abs" style="left:166.0999999999999px;top:341.2px;" width="14.0" height="14.0" viewBox="0 0 14 14"><rect x="3.7" y="1.4" width="6.6" height="8.8" rx="3.3" fill="#f2605f"/><path d="M2.8 7.6 Q2.8 11.4 7 11.4 Q11.2 11.4 11.2 7.6" fill="none" stroke="#f2605f" stroke-width="0.7" opacity="0.55"/><path d="M7 10 V12.4" stroke="#f2605f" stroke-width="1.6"/><path d="M4.4 12.9 H9.6" stroke="#f2605f" stroke-width="1.4"/><path d="M1.3 14.3 L13.7 0.9" stroke="#2c2c2c" stroke-width="2.4"/><path d="M0.5 13.7 L12.9 0.3" stroke="#f2605f" stroke-width="1.3"/></svg><div class="t" style="left:183.77px;top:341.63px;font-size:13.2px;color:#fff;letter-spacing:-0.411px;">20230430066_ maulid...</div>
<div class="abs" style="left:3.2000000000000455px;top:428.79999999999995px;width:111.7px;height:18.8px;background:rgba(47,47,47,0.78);border-radius:5px;"></div><svg class="abs" style="left:5.7999999999999545px;top:431.19999999999993px;" width="14.0" height="14.0" viewBox="0 0 14 14"><rect x="3.7" y="1.4" width="6.6" height="8.8" rx="3.3" fill="#f2605f"/><path d="M2.8 7.6 Q2.8 11.4 7 11.4 Q11.2 11.4 11.2 7.6" fill="none" stroke="#f2605f" stroke-width="0.7" opacity="0.55"/><path d="M7 10 V12.4" stroke="#f2605f" stroke-width="1.6"/><path d="M4.4 12.9 H9.6" stroke="#f2605f" stroke-width="1.4"/><path d="M1.3 14.3 L13.7 0.9" stroke="#2c2c2c" stroke-width="2.4"/><path d="M0.5 13.7 L12.9 0.3" stroke="#f2605f" stroke-width="1.3"/></svg><div class="t" style="left:23.47px;top:431.63px;font-size:13.2px;color:#fff;letter-spacing:-0.040px;">Nabilah Alzena</div>
<div class="abs" style="left:163.5px;top:428.79999999999995px;width:108.4px;height:18.8px;background:rgba(47,47,47,0.78);border-radius:5px;"></div><svg class="abs" style="left:166.0999999999999px;top:431.19999999999993px;" width="14.0" height="14.0" viewBox="0 0 14 14"><rect x="3.7" y="1.4" width="6.6" height="8.8" rx="3.3" fill="#f2605f"/><path d="M2.8 7.6 Q2.8 11.4 7 11.4 Q11.2 11.4 11.2 7.6" fill="none" stroke="#f2605f" stroke-width="0.7" opacity="0.55"/><path d="M7 10 V12.4" stroke="#f2605f" stroke-width="1.6"/><path d="M4.4 12.9 H9.6" stroke="#f2605f" stroke-width="1.4"/><path d="M1.3 14.3 L13.7 0.9" stroke="#2c2c2c" stroke-width="2.4"/><path d="M0.5 13.7 L12.9 0.3" stroke="#f2605f" stroke-width="1.3"/></svg><div class="t" style="left:183.77px;top:431.63px;font-size:13.2px;color:#fff;letter-spacing:-0.294px;">Silvia Salsabila</div>
<div class="abs" style="left:3.2000000000000455px;top:518.8px;width:67.5px;height:18.8px;background:rgba(47,47,47,0.78);border-radius:5px;"></div><svg class="abs" style="left:5.7999999999999545px;top:521.1999999999999px;" width="14.0" height="14.0" viewBox="0 0 14 14"><rect x="3.7" y="1.4" width="6.6" height="8.8" rx="3.3" fill="#f2605f"/><path d="M2.8 7.6 Q2.8 11.4 7 11.4 Q11.2 11.4 11.2 7.6" fill="none" stroke="#f2605f" stroke-width="0.7" opacity="0.55"/><path d="M7 10 V12.4" stroke="#f2605f" stroke-width="1.6"/><path d="M4.4 12.9 H9.6" stroke="#f2605f" stroke-width="1.4"/><path d="M1.3 14.3 L13.7 0.9" stroke="#2c2c2c" stroke-width="2.4"/><path d="M0.5 13.7 L12.9 0.3" stroke="#f2605f" stroke-width="1.3"/></svg><div class="t" style="left:23.47px;top:521.63px;font-size:13.2px;color:#fff;letter-spacing:-0.307px;">Charisa</div>
<div class="abs" style="left:163.5px;top:518.8px;width:97.5px;height:18.8px;background:rgba(47,47,47,0.78);border-radius:5px;"></div><svg class="abs" style="left:166.0999999999999px;top:521.1999999999999px;" width="14.0" height="14.0" viewBox="0 0 14 14"><rect x="3.7" y="1.4" width="6.6" height="8.8" rx="3.3" fill="#f2605f"/><path d="M2.8 7.6 Q2.8 11.4 7 11.4 Q11.2 11.4 11.2 7.6" fill="none" stroke="#f2605f" stroke-width="0.7" opacity="0.55"/><path d="M7 10 V12.4" stroke="#f2605f" stroke-width="1.6"/><path d="M4.4 12.9 H9.6" stroke="#f2605f" stroke-width="1.4"/><path d="M1.3 14.3 L13.7 0.9" stroke="#2c2c2c" stroke-width="2.4"/><path d="M0.5 13.7 L12.9 0.3" stroke="#f2605f" stroke-width="1.3"/></svg><div class="t" style="left:183.77px;top:521.63px;font-size:13.2px;color:#fff;letter-spacing:-0.556px;">Yashinta_094</div>
<div class="abs" style="left:3.2000000000000455px;top:608.8px;width:80.0px;height:18.8px;background:rgba(47,47,47,0.78);border-radius:5px;"></div><svg class="abs" style="left:5.7999999999999545px;top:611.1999999999999px;" width="14.0" height="14.0" viewBox="0 0 14 14"><rect x="3.7" y="1.4" width="6.6" height="8.8" rx="3.3" fill="#f2605f"/><path d="M2.8 7.6 Q2.8 11.4 7 11.4 Q11.2 11.4 11.2 7.6" fill="none" stroke="#f2605f" stroke-width="0.7" opacity="0.55"/><path d="M7 10 V12.4" stroke="#f2605f" stroke-width="1.6"/><path d="M4.4 12.9 H9.6" stroke="#f2605f" stroke-width="1.4"/><path d="M1.3 14.3 L13.7 0.9" stroke="#2c2c2c" stroke-width="2.4"/><path d="M0.5 13.7 L12.9 0.3" stroke="#f2605f" stroke-width="1.3"/></svg><div class="t" style="left:23.47px;top:611.63px;font-size:13.2px;color:#fff;letter-spacing:-0.412px;">Firda_093</div>
<div class="abs" style="left:163.5px;top:608.8px;width:105.9px;height:18.8px;background:rgba(47,47,47,0.78);border-radius:5px;"></div><svg class="abs" style="left:166.0999999999999px;top:611.1999999999999px;" width="14.0" height="14.0" viewBox="0 0 14 14"><rect x="3.7" y="1.4" width="6.6" height="8.8" rx="3.3" fill="#f2605f"/><path d="M2.8 7.6 Q2.8 11.4 7 11.4 Q11.2 11.4 11.2 7.6" fill="none" stroke="#f2605f" stroke-width="0.7" opacity="0.55"/><path d="M7 10 V12.4" stroke="#f2605f" stroke-width="1.6"/><path d="M4.4 12.9 H9.6" stroke="#f2605f" stroke-width="1.4"/><path d="M1.3 14.3 L13.7 0.9" stroke="#2c2c2c" stroke-width="2.4"/><path d="M0.5 13.7 L12.9 0.3" stroke="#f2605f" stroke-width="1.3"/></svg><div class="t" style="left:183.77px;top:611.63px;font-size:13.2px;color:#fff;letter-spacing:-0.165px;">Naia Ramania</div>
<div class="abs" style="left:3.2000000000000455px;top:698.8px;width:52.7px;height:18.8px;background:rgba(47,47,47,0.78);border-radius:5px;"></div><svg class="abs" style="left:5.7999999999999545px;top:701.1999999999999px;" width="14.0" height="14.0" viewBox="0 0 14 14"><rect x="3.7" y="1.4" width="6.6" height="8.8" rx="3.3" fill="#f2605f"/><path d="M2.8 7.6 Q2.8 11.4 7 11.4 Q11.2 11.4 11.2 7.6" fill="none" stroke="#f2605f" stroke-width="0.7" opacity="0.55"/><path d="M7 10 V12.4" stroke="#f2605f" stroke-width="1.6"/><path d="M4.4 12.9 H9.6" stroke="#f2605f" stroke-width="1.4"/><path d="M1.3 14.3 L13.7 0.9" stroke="#2c2c2c" stroke-width="2.4"/><path d="M0.5 13.7 L12.9 0.3" stroke="#f2605f" stroke-width="1.3"/></svg><div class="t" style="left:23.47px;top:701.63px;font-size:13.2px;color:#fff;letter-spacing:-0.295px;">siska</div>
<div class="abs" style="left:163.5px;top:698.8px;width:61.9px;height:18.8px;background:rgba(47,47,47,0.78);border-radius:5px;"></div><svg class="abs" style="left:166.0999999999999px;top:701.1999999999999px;" width="14.0" height="14.0" viewBox="0 0 14 14"><rect x="3.7" y="1.4" width="6.6" height="8.8" rx="3.3" fill="#f2605f"/><path d="M2.8 7.6 Q2.8 11.4 7 11.4 Q11.2 11.4 11.2 7.6" fill="none" stroke="#f2605f" stroke-width="0.7" opacity="0.55"/><path d="M7 10 V12.4" stroke="#f2605f" stroke-width="1.6"/><path d="M4.4 12.9 H9.6" stroke="#f2605f" stroke-width="1.4"/><path d="M1.3 14.3 L13.7 0.9" stroke="#2c2c2c" stroke-width="2.4"/><path d="M0.5 13.7 L12.9 0.3" stroke="#f2605f" stroke-width="1.3"/></svg><div class="t" style="left:183.77px;top:701.63px;font-size:13.2px;color:#fff;letter-spacing:0.270px;">agung</div>
<div class="abs" style="left:3.2000000000000455px;top:788.8px;width:103.0px;height:18.8px;background:rgba(47,47,47,0.78);border-radius:5px;"></div><svg class="abs" style="left:5.7999999999999545px;top:791.1999999999999px;" width="14.0" height="14.0" viewBox="0 0 14 14"><rect x="3.7" y="1.4" width="6.6" height="8.8" rx="3.3" fill="#f2605f"/><path d="M2.8 7.6 Q2.8 11.4 7 11.4 Q11.2 11.4 11.2 7.6" fill="none" stroke="#f2605f" stroke-width="0.7" opacity="0.55"/><path d="M7 10 V12.4" stroke="#f2605f" stroke-width="1.6"/><path d="M4.4 12.9 H9.6" stroke="#f2605f" stroke-width="1.4"/><path d="M1.3 14.3 L13.7 0.9" stroke="#2c2c2c" stroke-width="2.4"/><path d="M0.5 13.7 L12.9 0.3" stroke="#f2605f" stroke-width="1.3"/></svg><div class="t" style="left:23.47px;top:791.63px;font-size:13.2px;color:#fff;letter-spacing:-0.207px;">Rifda Fadiyah</div>
<div class="abs" style="left:163.5px;top:788.8px;width:139.7px;height:18.8px;background:rgba(47,47,47,0.78);border-radius:5px;"></div><svg class="abs" style="left:166.0999999999999px;top:791.1999999999999px;" width="14.0" height="14.0" viewBox="0 0 14 14"><rect x="3.7" y="1.4" width="6.6" height="8.8" rx="3.3" fill="#f2605f"/><path d="M2.8 7.6 Q2.8 11.4 7 11.4 Q11.2 11.4 11.2 7.6" fill="none" stroke="#f2605f" stroke-width="0.7" opacity="0.55"/><path d="M7 10 V12.4" stroke="#f2605f" stroke-width="1.6"/><path d="M4.4 12.9 H9.6" stroke="#f2605f" stroke-width="1.4"/><path d="M1.3 14.3 L13.7 0.9" stroke="#2c2c2c" stroke-width="2.4"/><path d="M0.5 13.7 L12.9 0.3" stroke="#f2605f" stroke-width="1.3"/></svg><div class="t" style="left:183.77px;top:791.63px;font-size:13.2px;color:#fff;letter-spacing:-0.427px;">23_003 Rahel Ervina</div>
</div>
<div class="abs" style="left:1600px;top:44px;width:320px;height:988px;background:#fff;overflow:hidden">
<div class="abs" style="left:0px;top:0px;width:320px;height:44px;background:#f0f3f7;"></div>
<div class="t" style="left:83.93px;top:14.95px;font-size:14px;color:#14142b;letter-spacing:-0.497px;font-weight:bold;">Participants (72)</div>
<svg class="abs" style="left:269px;top:15px;" width="15" height="14" viewBox="0 0 15 14"><path d="M6.4 1.6 H3.4 Q1 1.6 1 4 V10.6 Q1 13 3.4 13 H10.4 Q12.8 13 12.8 10.6 V8" fill="none" stroke="#4e5560" stroke-width="1.5" stroke-linecap="round"/><path d="M6.6 7.6 L13.4 0.9 M9 0.8 H13.6 V5.4" fill="none" stroke="#4e5560" stroke-width="1.5" stroke-linecap="round" stroke-linejoin="round"/></svg>
<svg class="abs" style="left:297px;top:17px;" width="10" height="10" viewBox="0 0 10 10"><path d="M0.4 0.4 L9.6 9.6 M9.6 0.4 L0.4 9.6" stroke="#55556a" stroke-width="1.1"/></svg>
<div class="abs" style="left:19.2px;top:54px;width:284.6px;height:31.7px;background:#fff;border:1px solid #b4b0cc;border-radius:8px;"></div>
<svg class="abs" style="left:30.5px;top:63.8px;" width="13" height="13" viewBox="0 0 13 13"><circle cx="5.2" cy="5.2" r="4.4" fill="none" stroke="#555" stroke-width="1.2"/><path d="M8.4 8.4 L12 12" stroke="#555" stroke-width="1.3" stroke-linecap="round"/></svg>
<div class="t" style="left:46.73px;top:62.15px;font-size:14px;color:#6c6c80;letter-spacing:-0.324px;">Find a participant</div>
<div class="abs" style="left:0;top:88px;width:320px;height:844.5px;overflow:hidden">
<div class="abs" style="left:22.7px;top:6.8px;width:25.8px;height:25.8px;background:#ccc;border-radius:7px;background:radial-gradient(ellipse at 22% 48%,#dfe7ec 0 15%,rgba(0,0,0,0) 18%),radial-gradient(ellipse at 88% 22%,#e3eaee 0 17%,rgba(0,0,0,0) 20%),radial-gradient(ellipse at 70% 88%,#e8e8e4 0 9%,rgba(0,0,0,0) 12%),radial-gradient(ellipse at 55% 45%,#a59549 0 44%,rgba(0,0,0,0) 50%),linear-gradient(180deg,#b9ad68 0%,#9a8d45 45%,#7b8444 75%,#5a6e3a 100%);"></div>
<div class="t" style="left:60.55px;top:13.59px;font-size:13.6px;color:#1c1c30;letter-spacing:-0.313px;">Hery (Host, me)</div>
<svg class="abs" style="left:256.3px;top:11.8px;" width="16" height="16" viewBox="0 0 16 16"><rect x="5.2" y="0.9" width="5.6" height="8.6" rx="2.8" fill="none" stroke="#e02828" stroke-width="1"/><path d="M3.4 7.4 Q3.4 11.6 8 11.6 Q12.6 11.6 12.6 7.4" fill="none" stroke="#e02828" stroke-width="1"/><path d="M8 11.6 V14.4 M5.6 14.6 H10.4" stroke="#e02828" stroke-width="1"/><path d="M1.5 16.5 L15.9 1.1" stroke="#fff" stroke-width="1.9"/><path d="M0.2 15.9 L15.6 0.3" stroke="#e02828" stroke-width="1.1"/></svg>
<svg class="abs" style="left:280px;top:11.7px;" width="17" height="16" viewBox="0 0 17 16"><rect x="0.6" y="3.2" width="11.4" height="9.6" rx="1.8" fill="none" stroke="#e02828" stroke-width="1.1"/><path d="M12.2 7 L16 4.4 V11.6 L12.2 9" fill="none" stroke="#e02828" stroke-width="1.1" stroke-linejoin="round"/><path d="M0.9 16.9 L16.9 1.1" stroke="#fff" stroke-width="1.9"/><path d="M0 16 L16.2 0.2" stroke="#e02828" stroke-width="1.1"/></svg>
<svg class="abs" style="left:233.5px;top:13.2px;" width="13" height="13" viewBox="0 0 13 13"><circle cx="6.3" cy="6.6" r="5.3" fill="none" stroke="#7c7c8a" stroke-width="0.9"/><circle cx="6.3" cy="6.6" r="1.7" fill="#ff3b47"/></svg>
<div class="abs" style="left:22.7px;top:47.83px;width:25.8px;height:25.8px;background:#ccc;border-radius:7px;background:radial-gradient(circle at 47% 30%,#2b2430 0 4%,rgba(0,0,0,0) 6%),radial-gradient(circle at 85% 33%,#2b2430 0 3%,rgba(0,0,0,0) 5%),radial-gradient(ellipse at 30% 34%,#eac2a6 0 30%,rgba(0,0,0,0) 35%),radial-gradient(ellipse at 82% 50%,#e4b899 0 23%,rgba(0,0,0,0) 27%),radial-gradient(ellipse at 76% 14%,#c9a24e 0 12%,rgba(0,0,0,0) 16%),radial-gradient(ellipse at 64% 80%,#8db398 0 17%,rgba(0,0,0,0) 22%),linear-gradient(180deg,#c8a68e 0%,#b6927a 45%,#26377a 62%,#15225a 100%);"></div>
<div class="t" style="left:60.55px;top:54.62px;font-size:13.6px;color:#1c1c30;letter-spacing:-0.247px;">farizah (Co-host)</div>
<div class="abs" style="left:232px;top:54.9px;width:16px;height:12px;background:#00a82d;border-radius:2.4px;"></div>
<svg class="abs" style="left:236.5px;top:57px;" width="7" height="8" viewBox="0 0 7 8"><path d="M3.5 0.4 L0.2 3.8 H2.3 V7.4 H4.7 V3.8 H6.8 Z" fill="#fff"/></svg>
<svg class="abs" style="left:258px;top:53px;" width="12" height="16" viewBox="0 0 12 16"><rect x="3.2" y="0.6" width="5.6" height="10" rx="2.8" fill="#73737f"/><path d="M3.2 3.4 A2.8 2.8 0 0 1 8.8 3.4 Z" fill="#e9e9ee"/><path d="M1 7.4 Q1 12 6 12 Q11 12 11 7.4" fill="none" stroke="#85858f" stroke-width="1"/><path d="M6 12 V14.6 M3.6 15 H8.4" stroke="#85858f" stroke-width="1"/></svg>
<svg class="abs" style="left:280px;top:55.6px;" width="17" height="11" viewBox="0 0 17 11"><rect x="0.6" y="0.6" width="11.4" height="9.6" rx="2.2" fill="none" stroke="#6a6a80" stroke-width="1.15"/><path d="M12.2 4.4 L16 1.8 V9 L12.2 6.4" fill="none" stroke="#6a6a80" stroke-width="1.15" stroke-linejoin="round"/></svg>
<div class="abs" style="left:22.7px;top:88.86px;width:25.8px;height:25.8px;background:#ccc;border-radius:7px;background:radial-gradient(ellipse at 58% 74%,#c98b78 0 6%,rgba(0,0,0,0) 9%),radial-gradient(ellipse at 58% 56%,#dca486 0 25%,rgba(0,0,0,0) 29%),radial-gradient(ellipse at 52% 60%,#262224 0 53%,rgba(0,0,0,0) 56%),linear-gradient(#ebebed,#e4e4e7);"></div>
<div class="t" style="left:60.55px;top:95.65px;font-size:13.6px;color:#1c1c30;letter-spacing:-0.156px;">Dita Nurlita (Co-host)</div>
<svg class="abs" style="left:256.3px;top:93.86px;" width="16" height="16" viewBox="0 0 16 16"><rect x="5.2" y="0.9" width="5.6" height="8.6" rx="2.8" fill="none" stroke="#e02828" stroke-width="1"/><path d="M3.4 7.4 Q3.4 11.6 8 11.6 Q12.6 11.6 12.6 7.4" fill="none" stroke="#e02828" stroke-width="1"/><path d="M8 11.6 V14.4 M5.6 14.6 H10.4" stroke="#e02828" stroke-width="1"/><path d="M1.5 16.5 L15.9 1.1" stroke="#fff" stroke-width="1.9"/><path d="M0.2 15.9 L15.6 0.3" stroke="#e02828" stroke-width="1.1"/></svg>
<svg class="abs" style="left:280px;top:93.76px;" width="17" height="16" viewBox="0 0 17 16"><rect x="0.6" y="3.2" width="11.4" height="9.6" rx="1.8" fill="none" stroke="#e02828" stroke-width="1.1"/><path d="M12.2 7 L16 4.4 V11.6 L12.2 9" fill="none" stroke="#e02828" stroke-width="1.1" stroke-linejoin="round"/><path d="M0.9 16.9 L16.9 1.1" stroke="#fff" stroke-width="1.9"/><path d="M0 16 L16.2 0.2" stroke="#e02828" stroke-width="1.1"/></svg>
<div class="abs" style="left:22.7px;top:129.89px;width:25.8px;height:25.8px;border-radius:7px;background:#8b45b0;color:#fff;font-weight:normal;-webkit-text-stroke:0.45px #fff;font-size:14.6px;line-height:26.2px;text-align:center;letter-spacing:-0.4px">I</div>
<div class="t" style="left:60.55px;top:136.68px;font-size:13.6px;color:#1c1c30;letter-spacing:-0.244px;">ilham (Co-host)</div>
<svg class="abs" style="left:256.3px;top:134.89px;" width="16" height="16" viewBox="0 0 16 16"><rect x="5.2" y="0.9" width="5.6" height="8.6" rx="2.8" fill="none" stroke="#e02828" stroke-width="1"/><path d="M3.4 7.4 Q3.4 11.6 8 11.6 Q12.6 11.6 12.6 7.4" fill="none" stroke="#e02828" stroke-width="1"/><path d="M8 11.6 V14.4 M5.6 14.6 H10.4" stroke="#e02828" stroke-width="1"/><path d="M1.5 16.5 L15.9 1.1" stroke="#fff" stroke-width="1.9"/><path d="M0.2 15.9 L15.6 0.3" stroke="#e02828" stroke-width="1.1"/></svg>
<svg class="abs" style="left:280px;top:134.79px;" width="17" height="16" viewBox="0 0 17 16"><rect x="0.6" y="3.2" width="11.4" height="9.6" rx="1.8" fill="none" stroke="#e02828" stroke-width="1.1"/><path d="M12.2 7 L16 4.4 V11.6 L12.2 9" fill="none" stroke="#e02828" stroke-width="1.1" stroke-linejoin="round"/><path d="M0.9 16.9 L16.9 1.1" stroke="#fff" stroke-width="1.9"/><path d="M0 16 L16.2 0.2" stroke="#e02828" stroke-width="1.1"/></svg>
<div class="abs" style="left:22.7px;top:170.92px;width:25.8px;height:25.8px;border-radius:7px;background:#0b4f9e;color:#fff;font-weight:normal;-webkit-text-stroke:0.45px #fff;font-size:14.6px;line-height:26.2px;text-align:center;letter-spacing:-0.4px">P</div>
<div class="t" style="left:60.55px;top:177.71px;font-size:13.6px;color:#1c1c30;letter-spacing:-0.370px;">20230430066_ maulidiya putri</div>
<svg class="abs" style="left:256.3px;top:175.92px;" width="16" height="16" viewBox="0 0 16 16"><rect x="5.2" y="0.9" width="5.6" height="8.6" rx="2.8" fill="none" stroke="#e02828" stroke-width="1"/><path d="M3.4 7.4 Q3.4 11.6 8 11.6 Q12.6 11.6 12.6 7.4" fill="none" stroke="#e02828" stroke-width="1"/><path d="M8 11.6 V14.4 M5.6 14.6 H10.4" stroke="#e02828" stroke-width="1"/><path d="M1.5 16.5 L15.9 1.1" stroke="#fff" stroke-width="1.9"/><path d="M0.2 15.9 L15.6 0.3" stroke="#e02828" stroke-width="1.1"/></svg>
<svg class="abs" style="left:280px;top:175.82px;" width="17" height="16" viewBox="0 0 17 16"><rect x="0.6" y="3.2" width="11.4" height="9.6" rx="1.8" fill="none" stroke="#e02828" stroke-width="1.1"/><path d="M12.2 7 L16 4.4 V11.6 L12.2 9" fill="none" stroke="#e02828" stroke-width="1.1" stroke-linejoin="round"/><path d="M0.9 16.9 L16.9 1.1" stroke="#fff" stroke-width="1.9"/><path d="M0 16 L16.2 0.2" stroke="#e02828" stroke-width="1.1"/></svg>
<div class="abs" style="left:22.7px;top:211.95px;width:25.8px;height:25.8px;border-radius:7px;background:#0b96a6;color:#fff;font-weight:normal;-webkit-text-stroke:0.45px #fff;font-size:14.6px;line-height:26.2px;text-align:center;letter-spacing:-0.4px">a</div>
<div class="t" style="left:60.55px;top:218.74px;font-size:13.6px;color:#1c1c30;letter-spacing:-0.637px;">20230430078_Amanda R</div>
<svg class="abs" style="left:256.3px;top:216.95px;" width="16" height="16" viewBox="0 0 16 16"><rect x="5.2" y="0.9" width="5.6" height="8.6" rx="2.8" fill="none" stroke="#e02828" stroke-width="1"/><path d="M3.4 7.4 Q3.4 11.6 8 11.6 Q12.6 11.6 12.6 7.4" fill="none" stroke="#e02828" stroke-width="1"/><path d="M8 11.6 V14.4 M5.6 14.6 H10.4" stroke="#e02828" stroke-width="1"/><path d="M1.5 16.5 L15.9 1.1" stroke="#fff" stroke-width="1.9"/><path d="M0.2 15.9 L15.6 0.3" stroke="#e02828" stroke-width="1.1"/></svg>
<svg class="abs" style="left:280px;top:216.85px;" width="17" height="16" viewBox="0 0 17 16"><rect x="0.6" y="3.2" width="11.4" height="9.6" rx="1.8" fill="none" stroke="#e02828" stroke-width="1.1"/><path d="M12.2 7 L16 4.4 V11.6 L12.2 9" fill="none" stroke="#e02828" stroke-width="1.1" stroke-linejoin="round"/><path d="M0.9 16.9 L16.9 1.1" stroke="#fff" stroke-width="1.9"/><path d="M0 16 L16.2 0.2" stroke="#e02828" stroke-width="1.1"/></svg>
<div class="abs" style="left:22.7px;top:252.98px;width:25.8px;height:25.8px;background:#ccc;border-radius:7px;background:radial-gradient(ellipse at 58% 70%,#e7b49c 0 10%,rgba(0,0,0,0) 13%),radial-gradient(ellipse at 60% 42%,#e6c2ac 0 17%,rgba(0,0,0,0) 21%),radial-gradient(ellipse at 55% 48%,#35353a 0 36%,rgba(0,0,0,0) 41%),radial-gradient(ellipse at 8% 45%,#e9f1f0 0 22%,rgba(0,0,0,0) 28%),radial-gradient(ellipse at 25% 95%,#d9cfa6 0 22%,rgba(0,0,0,0) 28%),linear-gradient(90deg,#c9d2cc 0%,#7b7d78 35%,#3c3c3a 70%,#55554e 100%);"></div>
<div class="t" style="left:60.55px;top:259.77px;font-size:13.6px;color:#1c1c30;letter-spacing:-0.502px;">20230810039_Dyah Ayu Nirmal...</div>
<svg class="abs" style="left:256.3px;top:257.98px;" width="16" height="16" viewBox="0 0 16 16"><rect x="5.2" y="0.9" width="5.6" height="8.6" rx="2.8" fill="none" stroke="#e02828" stroke-width="1"/><path d="M3.4 7.4 Q3.4 11.6 8 11.6 Q12.6 11.6 12.6 7.4" fill="none" stroke="#e02828" stroke-width="1"/><path d="M8 11.6 V14.4 M5.6 14.6 H10.4" stroke="#e02828" stroke-width="1"/><path d="M1.5 16.5 L15.9 1.1" stroke="#fff" stroke-width="1.9"/><path d="M0.2 15.9 L15.6 0.3" stroke="#e02828" stroke-width="1.1"/></svg>
<svg class="abs" style="left:280px;top:257.88px;" width="17" height="16" viewBox="0 0 17 16"><rect x="0.6" y="3.2" width="11.4" height="9.6" rx="1.8" fill="none" stroke="#e02828" stroke-width="1.1"/><path d="M12.2 7 L16 4.4 V11.6 L12.2 9" fill="none" stroke="#e02828" stroke-width="1.1" stroke-linejoin="round"/><path d="M0.9 16.9 L16.9 1.1" stroke="#fff" stroke-width="1.9"/><path d="M0 16 L16.2 0.2" stroke="#e02828" stroke-width="1.1"/></svg>
<div class="abs" style="left:22.7px;top:294.01px;width:25.8px;height:25.8px;border-radius:7px;background:#ffffff;color:#fff;font-weight:normal;-webkit-text-stroke:0.45px #fff;font-size:14.6px;line-height:26.2px;text-align:center;letter-spacing:-0.4px"></div>
<div class="t" style="left:60.55px;top:300.80px;font-size:13.6px;color:#1c1c30;letter-spacing:-0.495px;">216_Maureen</div>
<svg class="abs" style="left:256.3px;top:299.01px;" width="16" height="16" viewBox="0 0 16 16"><rect x="5.2" y="0.9" width="5.6" height="8.6" rx="2.8" fill="none" stroke="#e02828" stroke-width="1"/><path d="M3.4 7.4 Q3.4 11.6 8 11.6 Q12.6 11.6 12.6 7.4" fill="none" stroke="#e02828" stroke-width="1"/><path d="M8 11.6 V14.4 M5.6 14.6 H10.4" stroke="#e02828" stroke-width="1"/><path d="M1.5 16.5 L15.9 1.1" stroke="#fff" stroke-width="1.9"/><path d="M0.2 15.9 L15.6 0.3" stroke="#e02828" stroke-width="1.1"/></svg>
<svg class="abs" style="left:280px;top:298.91px;" width="17" height="16" viewBox="0 0 17 16"><rect x="0.6" y="3.2" width="11.4" height="9.6" rx="1.8" fill="none" stroke="#e02828" stroke-width="1.1"/><path d="M12.2 7 L16 4.4 V11.6 L12.2 9" fill="none" stroke="#e02828" stroke-width="1.1" stroke-linejoin="round"/><path d="M0.9 16.9 L16.9 1.1" stroke="#fff" stroke-width="1.9"/><path d="M0 16 L16.2 0.2" stroke="#e02828" stroke-width="1.1"/></svg>
<div class="abs" style="left:22.7px;top:335.04px;width:25.8px;height:25.8px;background:#ccc;border-radius:7px;background:linear-gradient(90deg,rgba(255,220,227,0) 0 8%,rgba(255,220,227,.0) 8% 38%,#ffdce3 38%),repeating-linear-gradient(180deg,#ffdce3 0 2.6px,#f4a9bd 2.6px 3.8px,#ffdce3 3.8px 4.7px);background-color:#ffdce3;"></div>
<div class="t" style="left:60.55px;top:341.83px;font-size:13.6px;color:#1c1c30;letter-spacing:-0.715px;">22_020_Rahma Aulia</div>
<svg class="abs" style="left:256.3px;top:340.04px;" width="16" height="16" viewBox="0 0 16 16"><rect x="5.2" y="0.9" width="5.6" height="8.6" rx="2.8" fill="none" stroke="#e02828" stroke-width="1"/><path d="M3.4 7.4 Q3.4 11.6 8 11.6 Q12.6 11.6 12.6 7.4" fill="none" stroke="#e02828" stroke-width="1"/><path d="M8 11.6 V14.4 M5.6 14.6 H10.4" stroke="#e02828" stroke-width="1"/><path d="M1.5 16.5 L15.9 1.1" stroke="#fff" stroke-width="1.9"/><path d="M0.2 15.9 L15.6 0.3" stroke="#e02828" stroke-width="1.1"/></svg>
<svg class="abs" style="left:280px;top:339.94px;" width="17" height="16" viewBox="0 0 17 16"><rect x="0.6" y="3.2" width="11.4" height="9.6" rx="1.8" fill="none" stroke="#e02828" stroke-width="1.1"/><path d="M12.2 7 L16 4.4 V11.6 L12.2 9" fill="none" stroke="#e02828" stroke-width="1.1" stroke-linejoin="round"/><path d="M0.9 16.9 L16.9 1.1" stroke="#fff" stroke-width="1.9"/><path d="M0 16 L16.2 0.2" stroke="#e02828" stroke-width="1.1"/></svg>
<div class="abs" style="left:22.7px;top:376.07px;width:25.8px;height:25.8px;border-radius:7px;background:#f9c6d8;color:#fff;font-weight:normal;-webkit-text-stroke:0.45px #fff;font-size:14.6px;line-height:26.2px;text-align:center;letter-spacing:-0.4px"></div>
<div class="t" style="left:60.55px;top:382.86px;font-size:13.6px;color:#1c1c30;letter-spacing:-0.445px;">23 009_Putri Friska Maylani</div>
<svg class="abs" style="left:256.3px;top:381.07px;" width="16" height="16" viewBox="0 0 16 16"><rect x="5.2" y="0.9" width="5.6" height="8.6" rx="2.8" fill="none" stroke="#e02828" stroke-width="1"/><path d="M3.4 7.4 Q3.4 11.6 8 11.6 Q12.6 11.6 12.6 7.4" fill="none" stroke="#e02828" stroke-width="1"/><path d="M8 11.6 V14.4 M5.6 14.6 H10.4" stroke="#e02828" stroke-width="1"/><path d="M1.5 16.5 L15.9 1.1" stroke="#fff" stroke-width="1.9"/><path d="M0.2 15.9 L15.6 0.3" stroke="#e02828" stroke-width="1.1"/></svg>
<svg class="abs" style="left:280px;top:380.97px;" width="17" height="16" viewBox="0 0 17 16"><rect x="0.6" y="3.2" width="11.4" height="9.6" rx="1.8" fill="none" stroke="#e02828" stroke-width="1.1"/><path d="M12.2 7 L16 4.4 V11.6 L12.2 9" fill="none" stroke="#e02828" stroke-width="1.1" stroke-linejoin="round"/><path d="M0.9 16.9 L16.9 1.1" stroke="#fff" stroke-width="1.9"/><path d="M0 16 L16.2 0.2" stroke="#e02828" stroke-width="1.1"/></svg>
<div class="abs" style="left:22.7px;top:417.10px;width:25.8px;height:25.8px;border-radius:7px;background:#c0392b;color:#fff;font-weight:bold;font-size:12.5px;line-height:26.2px;text-align:center;letter-spacing:-0.4px">20</div>
<div class="t" style="left:60.55px;top:423.89px;font-size:13.6px;color:#1c1c30;letter-spacing:-0.392px;">23 060_Dhea Mutiara</div>
<svg class="abs" style="left:256.3px;top:422.1px;" width="16" height="16" viewBox="0 0 16 16"><rect x="5.2" y="0.9" width="5.6" height="8.6" rx="2.8" fill="none" stroke="#e02828" stroke-width="1"/><path d="M3.4 7.4 Q3.4 11.6 8 11.6 Q12.6 11.6 12.6 7.4" fill="none" stroke="#e02828" stroke-width="1"/><path d="M8 11.6 V14.4 M5.6 14.6 H10.4" stroke="#e02828" stroke-width="1"/><path d="M1.5 16.5 L15.9 1.1" stroke="#fff" stroke-width="1.9"/><path d="M0.2 15.9 L15.6 0.3" stroke="#e02828" stroke-width="1.1"/></svg>
<svg class="abs" style="left:280px;top:422.0px;" width="17" height="16" viewBox="0 0 17 16"><rect x="0.6" y="3.2" width="11.4" height="9.6" rx="1.8" fill="none" stroke="#e02828" stroke-width="1.1"/><path d="M12.2 7 L16 4.4 V11.6 L12.2 9" fill="none" stroke="#e02828" stroke-width="1.1" stroke-linejoin="round"/><path d="M0.9 16.9 L16.9 1.1" stroke="#fff" stroke-width="1.9"/><path d="M0 16 L16.2 0.2" stroke="#e02828" stroke-width="1.1"/></svg>
<div class="abs" style="left:22.7px;top:458.13px;width:25.8px;height:25.8px;background:#ccc;border-radius:7px;background:radial-gradient(circle at 62% 38%,#7a5646 0 10%,rgba(0,0,0,0) 13%),radial-gradient(ellipse at 58% 82%,#17171b 0 33%,rgba(0,0,0,0) 36%),linear-gradient(90deg,#f4f5f6 0 12%,#3f6cb2 12% 20%,#e9edf0 20% 40%,#9fb0ba 40% 70%,#f0f3f5 70% 80%,#3aa9e2 80% 100%);"></div>
<div class="t" style="left:60.55px;top:464.92px;font-size:13.6px;color:#1c1c30;letter-spacing:-0.614px;">23_003 Rahel Ervina</div>
<svg class="abs" style="left:256.3px;top:463.13px;" width="16" height="16" viewBox="0 0 16 16"><rect x="5.2" y="0.9" width="5.6" height="8.6" rx="2.8" fill="none" stroke="#e02828" stroke-width="1"/><path d="M3.4 7.4 Q3.4 11.6 8 11.6 Q12.6 11.6 12.6 7.4" fill="none" stroke="#e02828" stroke-width="1"/><path d="M8 11.6 V14.4 M5.6 14.6 H10.4" stroke="#e02828" stroke-width="1"/><path d="M1.5 16.5 L15.9 1.1" stroke="#fff" stroke-width="1.9"/><path d="M0.2 15.9 L15.6 0.3" stroke="#e02828" stroke-width="1.1"/></svg>
<svg class="abs" style="left:280px;top:463.03px;" width="17" height="16" viewBox="0 0 17 16"><rect x="0.6" y="3.2" width="11.4" height="9.6" rx="1.8" fill="none" stroke="#e02828" stroke-width="1.1"/><path d="M12.2 7 L16 4.4 V11.6 L12.2 9" fill="none" stroke="#e02828" stroke-width="1.1" stroke-linejoin="round"/><path d="M0.9 16.9 L16.9 1.1" stroke="#fff" stroke-width="1.9"/><path d="M0 16 L16.2 0.2" stroke="#e02828" stroke-width="1.1"/></svg>
<div class="abs" style="left:22.7px;top:499.16px;width:25.8px;height:25.8px;border-radius:7px;background:#8e44ad;color:#fff;font-weight:bold;font-size:12.5px;line-height:26.2px;text-align:center;letter-spacing:-0.4px">2I</div>
<div class="t" style="left:60.55px;top:505.95px;font-size:13.6px;color:#1c1c30;letter-spacing:-0.275px;">23-002 Inggita Amadea Tesalo...</div>
<svg class="abs" style="left:256.3px;top:504.16px;" width="16" height="16" viewBox="0 0 16 16"><rect x="5.2" y="0.9" width="5.6" height="8.6" rx="2.8" fill="none" stroke="#e02828" stroke-width="1"/><path d="M3.4 7.4 Q3.4 11.6 8 11.6 Q12.6 11.6 12.6 7.4" fill="none" stroke="#e02828" stroke-width="1"/><path d="M8 11.6 V14.4 M5.6 14.6 H10.4" stroke="#e02828" stroke-width="1"/><path d="M1.5 16.5 L15.9 1.1" stroke="#fff" stroke-width="1.9"/><path d="M0.2 15.9 L15.6 0.3" stroke="#e02828" stroke-width="1.1"/></svg>
<svg class="abs" style="left:280px;top:504.06px;" width="17" height="16" viewBox="0 0 17 16"><rect x="0.6" y="3.2" width="11.4" height="9.6" rx="1.8" fill="none" stroke="#e02828" stroke-width="1.1"/><path d="M12.2 7 L16 4.4 V11.6 L12.2 9" fill="none" stroke="#e02828" stroke-width="1.1" stroke-linejoin="round"/><path d="M0.9 16.9 L16.9 1.1" stroke="#fff" stroke-width="1.9"/><path d="M0 16 L16.2 0.2" stroke="#e02828" stroke-width="1.1"/></svg>
<div class="abs" style="left:22.7px;top:540.19px;width:25.8px;height:25.8px;background:#ccc;border-radius:7px;background:radial-gradient(circle at 52% 22%,#e2b69c 0 11%,rgba(0,0,0,0) 15%),radial-gradient(circle at 88% 28%,#dcb8a4 0 12%,rgba(0,0,0,0) 16%),radial-gradient(circle at 55% 62%,#c99a80 0 10%,rgba(0,0,0,0) 14%),radial-gradient(circle at 85% 70%,#e6d2c8 0 11%,rgba(0,0,0,0) 15%),radial-gradient(ellipse at 18% 40%,#2a58b8 0 14%,rgba(0,0,0,0) 19%),radial-gradient(ellipse at 12% 12%,#c0392b 0 12%,rgba(0,0,0,0) 17%),radial-gradient(ellipse at 20% 85%,#c86a3a 0 12%,rgba(0,0,0,0) 17%),linear-gradient(135deg,#2b2624,#5b473c 50%,#2a2320);"></div>
<div class="t" style="left:60.55px;top:546.98px;font-size:13.6px;color:#1c1c30;letter-spacing:-0.339px;">23-069_Nashwa Mey Ardhila</div>
<svg class="abs" style="left:256.3px;top:545.19px;" width="16" height="16" viewBox="0 0 16 16"><rect x="5.2" y="0.9" width="5.6" height="8.6" rx="2.8" fill="none" stroke="#e02828" stroke-width="1"/><path d="M3.4 7.4 Q3.4 11.6 8 11.6 Q12.6 11.6 12.6 7.4" fill="none" stroke="#e02828" stroke-width="1"/><path d="M8 11.6 V14.4 M5.6 14.6 H10.4" stroke="#e02828" stroke-width="1"/><path d="M1.5 16.5 L15.9 1.1" stroke="#fff" stroke-width="1.9"/><path d="M0.2 15.9 L15.6 0.3" stroke="#e02828" stroke-width="1.1"/></svg>
<svg class="abs" style="left:280px;top:545.09px;" width="17" height="16" viewBox="0 0 17 16"><rect x="0.6" y="3.2" width="11.4" height="9.6" rx="1.8" fill="none" stroke="#e02828" stroke-width="1.1"/><path d="M12.2 7 L16 4.4 V11.6 L12.2 9" fill="none" stroke="#e02828" stroke-width="1.1" stroke-linejoin="round"/><path d="M0.9 16.9 L16.9 1.1" stroke="#fff" stroke-width="1.9"/><path d="M0 16 L16.2 0.2" stroke="#e02828" stroke-width="1.1"/></svg>
<div class="abs" style="left:22.7px;top:581.22px;width:25.8px;height:25.8px;border-radius:7px;background:#c0392b;color:#fff;font-weight:bold;font-size:12.5px;line-height:26.2px;text-align:center;letter-spacing:-0.4px">2D</div>
<div class="t" style="left:60.55px;top:588.01px;font-size:13.6px;color:#1c1c30;letter-spacing:-0.824px;">24_097 DYAH AYU NING TYAS</div>
<svg class="abs" style="left:256.3px;top:586.22px;" width="16" height="16" viewBox="0 0 16 16"><rect x="5.2" y="0.9" width="5.6" height="8.6" rx="2.8" fill="none" stroke="#e02828" stroke-width="1"/><path d="M3.4 7.4 Q3.4 11.6 8 11.6 Q12.6 11.6 12.6 7.4" fill="none" stroke="#e02828" stroke-width="1"/><path d="M8 11.6 V14.4 M5.6 14.6 H10.4" stroke="#e02828" stroke-width="1"/><path d="M1.5 16.5 L15.9 1.1" stroke="#fff" stroke-width="1.9"/><path d="M0.2 15.9 L15.6 0.3" stroke="#e02828" stroke-width="1.1"/></svg>
<svg class="abs" style="left:280px;top:586.12px;" width="17" height="16" viewBox="0 0 17 16"><rect x="0.6" y="3.2" width="11.4" height="9.6" rx="1.8" fill="none" stroke="#e02828" stroke-width="1.1"/><path d="M12.2 7 L16 4.4 V11.6 L12.2 9" fill="none" stroke="#e02828" stroke-width="1.1" stroke-linejoin="round"/><path d="M0.9 16.9 L16.9 1.1" stroke="#fff" stroke-width="1.9"/><path d="M0 16 L16.2 0.2" stroke="#e02828" stroke-width="1.1"/></svg>
<div class="abs" style="left:22.7px;top:622.25px;width:25.8px;height:25.8px;border-radius:7px;background:#2980b9;color:#fff;font-weight:bold;font-size:14px;line-height:26.2px;text-align:center;letter-spacing:-0.4px">A</div>
<div class="t" style="left:60.55px;top:629.04px;font-size:13.6px;color:#1c1c30;letter-spacing:-0.065px;">agung</div>
<svg class="abs" style="left:256.3px;top:627.25px;" width="16" height="16" viewBox="0 0 16 16"><rect x="5.2" y="0.9" width="5.6" height="8.6" rx="2.8" fill="none" stroke="#e02828" stroke-width="1"/><path d="M3.4 7.4 Q3.4 11.6 8 11.6 Q12.6 11.6 12.6 7.4" fill="none" stroke="#e02828" stroke-width="1"/><path d="M8 11.6 V14.4 M5.6 14.6 H10.4" stroke="#e02828" stroke-width="1"/><path d="M1.5 16.5 L15.9 1.1" stroke="#fff" stroke-width="1.9"/><path d="M0.2 15.9 L15.6 0.3" stroke="#e02828" stroke-width="1.1"/></svg>
<svg class="abs" style="left:280px;top:627.15px;" width="17" height="16" viewBox="0 0 17 16"><rect x="0.6" y="3.2" width="11.4" height="9.6" rx="1.8" fill="none" stroke="#e02828" stroke-width="1.1"/><path d="M12.2 7 L16 4.4 V11.6 L12.2 9" fill="none" stroke="#e02828" stroke-width="1.1" stroke-linejoin="round"/><path d="M0.9 16.9 L16.9 1.1" stroke="#fff" stroke-width="1.9"/><path d="M0 16 L16.2 0.2" stroke="#e02828" stroke-width="1.1"/></svg>
<div class="abs" style="left:22.7px;top:663.28px;width:25.8px;height:25.8px;background:#ccc;border-radius:7px;background:radial-gradient(circle at 55% 18%,#c49474 0 10%,rgba(0,0,0,0) 13%),radial-gradient(circle at 16% 40%,#2f63b8 0 12%,rgba(0,0,0,0) 15%),radial-gradient(ellipse at 56% 65%,#4c7dbd 0 27%,rgba(0,0,0,0) 31%),radial-gradient(ellipse at 38% 10%,#e8c63a 0 12%,rgba(0,0,0,0) 16%),linear-gradient(90deg,#e8452e 0 30%,#ece6da 30% 78%,#e8452e 78% 90%,#f2ece6 90%);"></div>
<div class="t" style="left:60.55px;top:670.07px;font-size:13.6px;color:#1c1c30;letter-spacing:-0.413px;">Agus Wahyudi</div>
<svg class="abs" style="left:256.3px;top:668.28px;" width="16" height="16" viewBox="0 0 16 16"><rect x="5.2" y="0.9" width="5.6" height="8.6" rx="2.8" fill="none" stroke="#e02828" stroke-width="1"/><path d="M3.4 7.4 Q3.4 11.6 8 11.6 Q12.6 11.6 12.6 7.4" fill="none" stroke="#e02828" stroke-width="1"/><path d="M8 11.6 V14.4 M5.6 14.6 H10.4" stroke="#e02828" stroke-width="1"/><path d="M1.5 16.5 L15.9 1.1" stroke="#fff" stroke-width="1.9"/><path d="M0.2 15.9 L15.6 0.3" stroke="#e02828" stroke-width="1.1"/></svg>
<svg class="abs" style="left:280px;top:668.18px;" width="17" height="16" viewBox="0 0 17 16"><rect x="0.6" y="3.2" width="11.4" height="9.6" rx="1.8" fill="none" stroke="#e02828" stroke-width="1.1"/><path d="M12.2 7 L16 4.4 V11.6 L12.2 9" fill="none" stroke="#e02828" stroke-width="1.1" stroke-linejoin="round"/><path d="M0.9 16.9 L16.9 1.1" stroke="#fff" stroke-width="1.9"/><path d="M0 16 L16.2 0.2" stroke="#e02828" stroke-width="1.1"/></svg>
<div class="abs" style="left:22.7px;top:704.31px;width:25.8px;height:25.8px;background:#ccc;border-radius:7px;background:radial-gradient(ellipse at 30% 35%,#eef3f8 0 18%,rgba(0,0,0,0) 32%),radial-gradient(ellipse at 72% 60%,#e6edf4 0 16%,rgba(0,0,0,0) 30%),radial-gradient(ellipse at 45% 85%,#edf2f7 0 14%,rgba(0,0,0,0) 26%),radial-gradient(ellipse at 80% 15%,#dfe8f1 0 12%,rgba(0,0,0,0) 24%),linear-gradient(160deg,#8ca7c4,#b4c7da 50%,#7f9cbb);"></div>
<div class="t" style="left:60.55px;top:711.10px;font-size:13.6px;color:#1c1c30;letter-spacing:-0.321px;">aisiah cici</div>
<svg class="abs" style="left:256.3px;top:709.31px;" width="16" height="16" viewBox="0 0 16 16"><rect x="5.2" y="0.9" width="5.6" height="8.6" rx="2.8" fill="none" stroke="#e02828" stroke-width="1"/><path d="M3.4 7.4 Q3.4 11.6 8 11.6 Q12.6 11.6 12.6 7.4" fill="none" stroke="#e02828" stroke-width="1"/><path d="M8 11.6 V14.4 M5.6 14.6 H10.4" stroke="#e02828" stroke-width="1"/><path d="M1.5 16.5 L15.9 1.1" stroke="#fff" stroke-width="1.9"/><path d="M0.2 15.9 L15.6 0.3" stroke="#e02828" stroke-width="1.1"/></svg>
<svg class="abs" style="left:280px;top:709.21px;" width="17" height="16" viewBox="0 0 17 16"><rect x="0.6" y="3.2" width="11.4" height="9.6" rx="1.8" fill="none" stroke="#e02828" stroke-width="1.1"/><path d="M12.2 7 L16 4.4 V11.6 L12.2 9" fill="none" stroke="#e02828" stroke-width="1.1" stroke-linejoin="round"/><path d="M0.9 16.9 L16.9 1.1" stroke="#fff" stroke-width="1.9"/><path d="M0 16 L16.2 0.2" stroke="#e02828" stroke-width="1.1"/></svg>
<div class="abs" style="left:22.7px;top:745.34px;width:25.8px;height:25.8px;border-radius:7px;background:#000000;color:#fff;font-weight:normal;-webkit-text-stroke:0.45px #fff;font-size:14.6px;line-height:26.2px;text-align:center;letter-spacing:-0.4px"></div>
<div class="t" style="left:60.55px;top:752.13px;font-size:13.6px;color:#1c1c30;letter-spacing:-0.104px;">andini</div>
<svg class="abs" style="left:256.3px;top:750.34px;" width="16" height="16" viewBox="0 0 16 16"><rect x="5.2" y="0.9" width="5.6" height="8.6" rx="2.8" fill="none" stroke="#e02828" stroke-width="1"/><path d="M3.4 7.4 Q3.4 11.6 8 11.6 Q12.6 11.6 12.6 7.4" fill="none" stroke="#e02828" stroke-width="1"/><path d="M8 11.6 V14.4 M5.6 14.6 H10.4" stroke="#e02828" stroke-width="1"/><path d="M1.5 16.5 L15.9 1.1" stroke="#fff" stroke-width="1.9"/><path d="M0.2 15.9 L15.6 0.3" stroke="#e02828" stroke-width="1.1"/></svg>
<svg class="abs" style="left:280px;top:750.24px;" width="17" height="16" viewBox="0 0 17 16"><rect x="0.6" y="3.2" width="11.4" height="9.6" rx="1.8" fill="none" stroke="#e02828" stroke-width="1.1"/><path d="M12.2 7 L16 4.4 V11.6 L12.2 9" fill="none" stroke="#e02828" stroke-width="1.1" stroke-linejoin="round"/><path d="M0.9 16.9 L16.9 1.1" stroke="#fff" stroke-width="1.9"/><path d="M0 16 L16.2 0.2" stroke="#e02828" stroke-width="1.1"/></svg>
<div class="abs" style="left:22.7px;top:786.37px;width:25.8px;height:25.8px;background:#ccc;border-radius:7px;background:radial-gradient(ellipse at 50% 48%,#c94a5a 0 5%,rgba(0,0,0,0) 8%),radial-gradient(ellipse at 50% 36%,#dfae98 0 21%,rgba(0,0,0,0) 25%),radial-gradient(ellipse at 50% 30%,#191218 0 42%,rgba(0,0,0,0) 47%),radial-gradient(circle at 25% 80%,#d8527e 0 9%,rgba(0,0,0,0) 14%),radial-gradient(circle at 70% 85%,#e8a0b4 0 8%,rgba(0,0,0,0) 13%),radial-gradient(circle at 50% 95%,#b43a6a 0 9%,rgba(0,0,0,0) 14%),linear-gradient(180deg,#2a1c2c,#3e1f40 60%,#5a2850);"></div>
<div class="t" style="left:60.55px;top:793.16px;font-size:13.6px;color:#1c1c30;letter-spacing:-0.251px;">-Angelica Kresnamurti</div>
<svg class="abs" style="left:280px;top:791.37px;" width="16" height="16" viewBox="0 0 16 16"><rect x="5.2" y="0.9" width="5.6" height="8.6" rx="2.8" fill="none" stroke="#e02828" stroke-width="1"/><path d="M3.4 7.4 Q3.4 11.6 8 11.6 Q12.6 11.6 12.6 7.4" fill="none" stroke="#e02828" stroke-width="1"/><path d="M8 11.6 V14.4 M5.6 14.6 H10.4" stroke="#e02828" stroke-width="1"/><path d="M1.5 16.5 L15.9 1.1" stroke="#fff" stroke-width="1.9"/><path d="M0.2 15.9 L15.6 0.3" stroke="#e02828" stroke-width="1.1"/></svg>
<div class="abs" style="left:22.7px;top:827.40px;width:25.8px;height:25.8px;border-radius:7px;background:#d35400;color:#fff;font-weight:bold;font-size:14px;line-height:26.2px;text-align:center;letter-spacing:-0.4px">A</div>
<div class="t" style="left:60.55px;top:834.19px;font-size:13.6px;color:#1c1c30;letter-spacing:-0.131px;">arief sofvan UHT</div>
<svg class="abs" style="left:256.3px;top:832.4px;" width="16" height="16" viewBox="0 0 16 16"><rect x="5.2" y="0.9" width="5.6" height="8.6" rx="2.8" fill="none" stroke="#e02828" stroke-width="1"/><path d="M3.4 7.4 Q3.4 11.6 8 11.6 Q12.6 11.6 12.6 7.4" fill="none" stroke="#e02828" stroke-width="1"/><path d="M8 11.6 V14.4 M5.6 14.6 H10.4" stroke="#e02828" stroke-width="1"/><path d="M1.5 16.5 L15.9 1.1" stroke="#fff" stroke-width="1.9"/><path d="M0.2 15.9 L15.6 0.3" stroke="#e02828" stroke-width="1.1"/></svg>
<svg class="abs" style="left:280px;top:832.3px;" width="17" height="16" viewBox="0 0 17 16"><rect x="0.6" y="3.2" width="11.4" height="9.6" rx="1.8" fill="none" stroke="#e02828" stroke-width="1.1"/><path d="M12.2 7 L16 4.4 V11.6 L12.2 9" fill="none" stroke="#e02828" stroke-width="1.1" stroke-linejoin="round"/><path d="M0.9 16.9 L16.9 1.1" stroke="#fff" stroke-width="1.9"/><path d="M0 16 L16.2 0.2" stroke="#e02828" stroke-width="1.1"/></svg>
</div>
<div class="abs" style="left:310px;top:86px;width:10px;height:846.7px;background:#efeff4;border-radius:0 0 0 5px;"></div>
<div class="abs" style="left:310.3px;top:88.2px;width:7.4px;height:251px;background:#acacb6;border-radius:4px;"></div>
<div class="abs" style="left:44.2px;top:950.2px;width:52.5px;height:22.5px;background:#fff;border:1px solid #777783;border-radius:7.5px;"></div><div class="t" style="left:54.95px;top:954.84px;font-size:13.6px;color:#1c1c30;letter-spacing:-0.340px;">Invite</div>
<div class="abs" style="left:140px;top:950.2px;width:69.7px;height:22.5px;background:#fff;border:1px solid #777783;border-radius:7.5px;"></div><div class="t" style="left:150.85px;top:954.84px;font-size:13.6px;color:#1c1c30;letter-spacing:-0.002px;">Mute all</div>
<div class="abs" style="left:253px;top:950.2px;width:22.8px;height:22.5px;background:#fff;border:1px solid #777783;border-radius:7.5px;"></div>
<div class="abs" style="left:259.4px;top:960.2px;width:1.8px;height:1.8px;background:#333;border-radius:50%;"></div>
<div class="abs" style="left:263.4px;top:960.2px;width:1.8px;height:1.8px;background:#333;border-radius:50%;"></div>
<div class="abs" style="left:267.4px;top:960.2px;width:1.8px;height:1.8px;background:#333;border-radius:50%;"></div>
</div>
<div class="abs" style="left:0;top:973px;width:1600px;height:59px;background:#000;overflow:hidden">
<svg class="abs" style="left:40px;top:10px;" width="24" height="25" viewBox="0 0 24 25"><rect x="7.6" y="1" width="9" height="14.6" rx="4.5" fill="none" stroke="#fff" stroke-width="1.5"/><path d="M4.2 11.4 Q4.2 19 12 19 Q19.8 19 19.8 11.4" fill="none" stroke="#fff" stroke-width="1.5"/><path d="M12 19 V23 M7.8 23.2 H16.2" stroke="#fff" stroke-width="1.5"/><path d="M0.8 24.6 L23.2 0.6" stroke="#000" stroke-width="4.2"/><path d="M0.2 23.8 L23.6 0.8" stroke="#f0145a" stroke-width="2"/></svg>
<svg class="abs" style="left:80px;top:19.799999999999955px;" width="8" height="5" viewBox="0 0 8 5"><path d="M0.7 4.4 L4 1 L7.3 4.4" fill="none" stroke="#fff" stroke-width="1.4"/></svg>
<div class="t" style="left:35.63px;top:38.46px;font-size:12.1px;color:#fff;letter-spacing:0.389px;">Audio</div>
<svg class="abs" style="left:132px;top:10px;" width="26" height="25" viewBox="0 0 26 25"><rect x="1.6" y="5.6" width="15" height="13.4" rx="3" fill="none" stroke="#fff" stroke-width="1.5"/><path d="M17 10.4 L24 6.4 V18 L17 14" fill="none" stroke="#fff" stroke-width="1.5" stroke-linejoin="round"/><path d="M1.8 24.8 L24.6 1" stroke="#000" stroke-width="4.2"/><path d="M1 24 L24.8 0.8" stroke="#f0145a" stroke-width="2"/></svg>
<svg class="abs" style="left:178px;top:19.799999999999955px;" width="8" height="5" viewBox="0 0 8 5"><path d="M0.7 4.4 L4 1 L7.3 4.4" fill="none" stroke="#fff" stroke-width="1.4"/></svg>
<div class="t" style="left:129.03px;top:38.46px;font-size:12.1px;color:#fff;letter-spacing:0.060px;">Video</div>
<svg class="abs" style="left:523px;top:14px;" width="18" height="17" viewBox="0 0 18 17"><circle cx="5.4" cy="3.4" r="2.7" fill="none" stroke="#fff" stroke-width="1.4"/><path d="M4.2 8.8 Q0.8 8.8 0.8 12.2 V14 Q0.8 15.4 2.2 15.4 H4.4" fill="none" stroke="#fff" stroke-width="1.4" stroke-linecap="round"/><circle cx="12.2" cy="7" r="2.7" fill="none" stroke="#fff" stroke-width="1.4"/><path d="M9.6 11.6 H14.8 Q17.2 11.6 17.2 14 V14.4 Q17.2 16 15.6 16 H8.8 Q7.2 16 7.2 14.4 V14 Q7.2 11.6 9.6 11.6 Z" fill="none" stroke="#fff" stroke-width="1.4"/></svg>
<div class="t" style="left:547.62px;top:13.70px;font-size:12.4px;color:#e6e6e6;letter-spacing:-0.116px;">72</div>
<svg class="abs" style="left:581px;top:19.799999999999955px;" width="8" height="5" viewBox="0 0 8 5"><path d="M0.7 4.4 L4 1 L7.3 4.4" fill="none" stroke="#fff" stroke-width="1.4"/></svg>
<div class="t" style="left:501.03px;top:38.46px;font-size:12.1px;color:#fff;letter-spacing:-0.112px;">Participants</div>
<svg class="abs" style="left:630.5px;top:11px;" width="22" height="22" viewBox="0 0 22 22"><path d="M7.4 4.6 V3.6 Q7.4 0.8 10.2 0.8 H18.4 Q21.2 0.8 21.2 3.6 V9 Q21.2 11.8 18.4 11.8 H17.4" fill="none" stroke="#fff" stroke-width="1.4"/><path d="M3.6 4.8 H13.6 Q16.4 4.8 16.4 7.6 V13.4 Q16.4 16.2 13.6 16.2 H9 L5 20.6 V16.2 H3.6 Q0.8 16.2 0.8 13.4 V7.6 Q0.8 4.8 3.6 4.8 Z" fill="none" stroke="#fff" stroke-width="1.4" stroke-linejoin="round"/><circle cx="5" cy="10.5" r="1" fill="#fff"/><circle cx="8.6" cy="10.5" r="1" fill="#fff"/><circle cx="12.2" cy="10.5" r="1" fill="#fff"/></svg>
<svg class="abs" style="left:671px;top:19.799999999999955px;" width="8" height="5" viewBox="0 0 8 5"><path d="M0.7 4.4 L4 1 L7.3 4.4" fill="none" stroke="#fff" stroke-width="1.4"/></svg>
<div class="t" style="left:629.33px;top:38.46px;font-size:12.1px;color:#fff;letter-spacing:-0.100px;">Chat</div>
<svg class="abs" style="left:715px;top:11.5px;" width="24" height="21" viewBox="0 0 24 21"><path d="M12 19.6 C4 13.6 0.8 9.8 0.8 6.2 C0.8 3 3.2 0.8 6 0.8 C8.4 0.8 10.6 2.2 12 4.4 C13.4 2.2 15.6 0.8 18 0.8 C20.8 0.8 23.2 3 23.2 6.2 C23.2 9.8 20 13.6 12 19.6 Z" fill="none" stroke="#fff" stroke-width="1.4" stroke-linejoin="round" transform="rotate(-6 12 10)"/></svg>
<svg class="abs" style="left:751px;top:19.799999999999955px;" width="8" height="5" viewBox="0 0 8 5"><path d="M0.7 4.4 L4 1 L7.3 4.4" fill="none" stroke="#fff" stroke-width="1.4"/></svg>
<div class="t" style="left:711.83px;top:38.46px;font-size:12.1px;color:#fff;letter-spacing:-0.425px;">React</div>
<div class="abs" style="left:803.8px;top:12.200000000000045px;width:24.5px;height:19.5px;background:#20e784;border-radius:4px;"></div>
<svg class="abs" style="left:810px;top:15.600000000000023px;" width="12" height="13" viewBox="0 0 12 13"><path d="M6 12 V2 M1.6 6 L6 1.4 L10.4 6" fill="none" stroke="#000" stroke-width="2.1"/></svg>
<svg class="abs" style="left:849px;top:19.799999999999955px;" width="8" height="5" viewBox="0 0 8 5"><path d="M0.7 4.4 L4 1 L7.3 4.4" fill="none" stroke="#fff" stroke-width="1.4"/></svg>
<div class="t" style="left:800.53px;top:38.46px;font-size:12.1px;color:#fff;letter-spacing:-0.376px;">Share</div>
<svg class="abs" style="left:896px;top:12px;" width="18.5" height="20.5" viewBox="0 0 18.5 20.5"><path d="M9.2 0.9 C6.4 2.6 3.6 3.3 0.9 3.5 V9.8 C0.9 14.6 4.4 17.8 9.2 19.6 C14 17.8 17.5 14.6 17.5 9.8 V3.5 C14.8 3.3 12 2.6 9.2 0.9 Z" fill="none" stroke="#fff" stroke-width="1.4" stroke-linejoin="round"/><path d="M9.2 3.4 C11.2 4.5 13.2 5.1 15.2 5.4 V9.6 H9.2 Z" fill="#fff"/><path d="M9.2 9.6 V17 C6 15.6 3.4 13.2 3.2 9.6 Z" fill="#fff"/></svg>
<div class="t" style="left:878.03px;top:38.46px;font-size:12.1px;color:#fff;letter-spacing:0.047px;">Host tools</div>
<svg class="abs" style="left:974px;top:11px;" width="22" height="21.5" viewBox="0 0 22 21.5"><circle cx="17" cy="4.4" r="3.5" fill="none" stroke="#fff" stroke-width="1.4"/><circle cx="4.6" cy="16.6" r="3.5" fill="none" stroke="#fff" stroke-width="1.4"/><path d="M0.9 8.4 V5 Q0.9 1.2 4.7 1.2 H9" fill="none" stroke="#fff" stroke-width="1.4" stroke-linecap="round"/><path d="M21 12.6 V16.2 Q21 20 17.2 20 H12.6" fill="none" stroke="#fff" stroke-width="1.4" stroke-linecap="round"/></svg>
<svg class="abs" style="left:1009px;top:19.799999999999955px;" width="8" height="5" viewBox="0 0 8 5"><path d="M0.7 4.4 L4 1 L7.3 4.4" fill="none" stroke="#fff" stroke-width="1.4"/></svg>
<div class="t" style="left:970.53px;top:38.46px;font-size:12.1px;color:#fff;letter-spacing:0.065px;">Apps</div>
<div class="abs" style="left:1065px;top:10.5px;width:23.4px;height:23.2px;background:#000;border:1.6px solid #fff;border-radius:6px;"></div>
<div class="abs" style="left:1072.6px;top:17.399999999999977px;width:2.6px;height:9.4px;background:#fff;border-radius:1.3px;"></div>
<div class="abs" style="left:1078.2px;top:17.399999999999977px;width:2.6px;height:9.4px;background:#fff;border-radius:1.3px;"></div>
<div class="abs" style="left:1090.3px;top:10.5px;width:23.5px;height:23.2px;background:#000;border:1.6px solid #fff;border-radius:6px;"></div>
<div class="abs" style="left:1097.7px;top:17.700000000000045px;width:9px;height:9px;background:#fff;border-radius:2px;"></div>
<div class="t" style="left:1032.63px;top:40.16px;font-size:12.1px;color:#fff;letter-spacing:-0.053px;">Pause/stop recording</div>
<svg class="abs" style="left:1184px;top:10px;" width="24.6" height="24.6" viewBox="0 0 24.6 24.6"><circle cx="12.3" cy="12.3" r="11.4" fill="none" stroke="#fff" stroke-width="1.4"/><circle cx="6.8" cy="12.3" r="1.1" fill="#fff"/><circle cx="12.3" cy="12.3" r="1.1" fill="#fff"/><circle cx="17.8" cy="12.3" r="1.1" fill="#fff"/></svg>
<div class="t" style="left:1181.83px;top:38.46px;font-size:12.1px;color:#fff;letter-spacing:0.269px;">More</div>
<svg class="abs" style="left:1540px;top:11px;" width="24" height="22" viewBox="0 0 24 22"><path d="M6.6 0.9 H17.4 L23 11 L17.4 21.1 H6.6 L1 11 Z" fill="none" stroke="#f0145a" stroke-width="1.5" stroke-linejoin="round"/><path d="M8.4 7.4 L15.6 14.6 M15.6 7.4 L8.4 14.6" stroke="#fff" stroke-width="2.4" stroke-linecap="round"/></svg>
<div class="t" style="left:1542.13px;top:38.46px;font-size:12.1px;color:#fff;letter-spacing:-0.605px;">End</div>
</div>
<div class="abs" style="left:0;top:1032px;width:1920px;height:48px;overflow:hidden;background:linear-gradient(90deg,#f4e6e2 0px,#ecdfea 150px,#f4e4d8 260px,#f5e1cf 380px,#f2e6da 445px,#efeeec 500px,#efefef 540px,#eeeeee 1560px,#e6ebf3 1700px,#dce6f3 1800px,#e2eaf5 1920px);">
<div class="abs" style="left:1600px;top:-1px;width:320px;height:1.2px;background:#2a2a2a;"></div>
<svg class="abs" style="left:19px;top:13px;" width="25" height="22" viewBox="0 0 25 22"><circle cx="16.5" cy="7.5" r="6.2" fill="#f7a325"/><circle cx="17.5" cy="6.5" r="4" fill="#fbbf3a"/><path d="M5.6 20.6 Q0.6 20.6 0.6 16.4 Q0.6 12.6 4.6 12.2 Q6 7.4 10.8 7.8 Q14.6 8.2 15.6 11.8 Q19 10.6 21.6 12.8 Q24.4 15.4 22.8 18.6 Q21.6 20.6 19 20.6 Z" fill="#cfe0f5"/><path d="M5.6 20.6 Q0.6 20.6 0.6 16.4 Q3 19 8 18.4 H20 Q22.6 18.2 23.2 16 Q23.6 20.6 19 20.6 Z" fill="#9fbfe8"/></svg>
<div class="t" style="left:50.13px;top:10.36px;font-size:12.1px;color:#1a1a1a;letter-spacing:-0.437px;">26°C</div>
<div class="t" style="left:49.83px;top:25.56px;font-size:12.1px;color:#5c5c5c;letter-spacing:-0.307px;">Berawan</div>
<svg class="abs" style="left:528.8px;top:12.6px;" width="23.4" height="23.4" viewBox="0 0 23.4 23.4"><defs><linearGradient id="wg" x1="0" y1="0" x2="1" y2="1"><stop offset="0" stop-color="#55cbff"/><stop offset="1" stop-color="#0a72cf"/></linearGradient></defs><rect x="0" y="0" width="11.1" height="11.1" fill="url(#wg)"/><rect x="12.3" y="0" width="11.1" height="11.1" fill="#1f94e6"/><rect x="0" y="12.3" width="11.1" height="11.1" fill="#1f94e6"/><rect x="12.3" y="12.3" width="11.1" height="11.1" fill="#0a78d4"/></svg>
<div class="abs" style="left:565.8px;top:8.8px;width:218.4px;height:30.6px;background:#fdfdfd;border:1px solid #dedede;border-radius:15.3px;box-shadow:0 1px 1px rgba(0,0,0,.06);"></div>
<svg class="abs" style="left:577px;top:17.4px;" width="15" height="15" viewBox="0 0 15 15"><circle cx="6.2" cy="6.2" r="5.2" fill="none" stroke="#1c1c1c" stroke-width="1.7"/><path d="M10 10 L13.8 13.8" stroke="#1c1c1c" stroke-width="1.9" stroke-linecap="round"/></svg>
<div class="t" style="left:601.73px;top:16.75px;font-size:14px;color:#5a5a5a;letter-spacing:-0.569px;">Search</div>
<svg class="abs" style="left:732.5px;top:13.5px;" width="48" height="22" viewBox="0 0 48 22"><ellipse cx="24" cy="19" rx="22" ry="3.4" fill="#9fd3e6"/><circle cx="21" cy="4.5" r="2.6" fill="#f7d98a"/><ellipse cx="8" cy="4" rx="5" ry="1.4" fill="#cfe3f2"/><ellipse cx="36" cy="3" rx="5" ry="1.4" fill="#cfe3f2"/><path d="M2.0 17 V9.5 L4.6 6.5 L7.2 9.5 V17 Z" fill="#3f8f5a"/><path d="M7.4 17 V9.5 L10.0 6.5 L12.600000000000001 9.5 V17 Z" fill="#7a4a3a"/><path d="M12.8 17 V9.5 L15.4 6.5 L18.0 9.5 V17 Z" fill="#b5523a"/><path d="M18.200000000000003 17 V9.5 L20.800000000000004 6.5 L23.400000000000002 9.5 V17 Z" fill="#c98a4a"/><path d="M23.6 17 V9.5 L26.200000000000003 6.5 L28.8 9.5 V17 Z" fill="#8a3a2a"/><path d="M29.0 17 V9.5 L31.6 6.5 L34.2 9.5 V17 Z" fill="#b06a3a"/><path d="M34.400000000000006 17 V9.5 L37.00000000000001 6.5 L39.60000000000001 9.5 V17 Z" fill="#d8d2c4"/><path d="M39.800000000000004 17 V9.5 L42.400000000000006 6.5 L45.00000000000001 9.5 V17 Z" fill="#3a6a8a"/><rect x="2" y="16.4" width="44" height="1.6" fill="#2a4a7a"/></svg>
<div class="abs" style="left:804.5px;top:13px;width:16.4px;height:15.4px;background:linear-gradient(135deg,#ffffff,#c9c9c9);border-radius:1.5px;"></div>
<div class="abs" style="left:796.8px;top:19.4px;width:18px;height:15.4px;background:linear-gradient(135deg,#555,#111);border-radius:1.5px;"></div>
<div class="abs" style="left:802.4px;top:19.6px;width:12.4px;height:9px;background:linear-gradient(135deg,#bdbdbd,#9a9a9a);"></div>
<svg class="abs" style="left:841.7px;top:13.599999999999909px;" width="22.6" height="20.7" viewBox="0 0 20.4 18.7"><defs><linearGradient id="cpa2" x1="0" y1="0" x2="0.25" y2="1"><stop offset="0" stop-color="#1f9ee8"/><stop offset="0.38" stop-color="#27a3a4"/><stop offset="0.6" stop-color="#7cb848"/><stop offset="0.8" stop-color="#d2c022"/><stop offset="1" stop-color="#f2801e"/></linearGradient><linearGradient id="cpb2" x1="0.7" y1="0" x2="0.3" y2="1"><stop offset="0" stop-color="#9a3ee6"/><stop offset="0.28" stop-color="#c84fc8"/><stop offset="0.55" stop-color="#ea5590"/><stop offset="1" stop-color="#ff8c4a"/></linearGradient></defs><path d="M12.6 5.2 H17 Q20.6 5.2 20.2 8.4 Q19.6 13.4 17.4 16.6 Q16.4 18.3 14.4 18.3 H8 Q6.2 18.3 7.6 16 L11.2 7 Q11.8 5.2 12.6 5.2 Z" fill="url(#cpb2)"/><path d="M3.4 0.3 H13 Q14.8 0.3 15.2 2.2 L15.8 4.8 H12.8 Q11.4 4.8 10.8 6.4 L8.4 13.2 L7.4 17 Q7 18.6 6 17.4 L4.6 13.6 Q4.2 12.6 3 12.6 H1.6 Q0 12.6 0.2 10.4 L1 3.4 Q1.4 0.3 3.4 0.3 Z" fill="url(#cpa2)"/><path d="M10.6 0.3 H13 Q14.8 0.3 15.2 2.2 L15.8 4.9 H12.8 Q11.6 4.9 11 6 Q9.6 3 10.6 0.3 Z" fill="#0d3fd2" opacity="0.9"/><path d="M5.2 15 L8.2 13.4 L7.4 17 Q7 18.6 6 17.4 Z" fill="#f03412" opacity="0.9"/><path d="M11.3 5.7 H13 L10.1 13.2 H8.3 Z" fill="#fff" opacity="0.92"/></svg>
<svg class="abs" style="left:884.5px;top:13px;" width="25" height="22" viewBox="0 0 25 22"><circle cx="19.4" cy="5.6" r="2.8" fill="#5b5fc7"/><path d="M15.4 9.6 H23.4 Q24.4 9.6 24.4 10.6 V15.4 Q24.4 19 20.6 19 Q17.4 19 15.4 16.4 Z" fill="#5b5fc7"/><circle cx="12.4" cy="4.2" r="3.8" fill="#7b83eb"/><path d="M6.4 9.6 H17.4 Q18.6 9.6 18.6 10.8 V16.6 Q18.6 21.6 12.6 21.6 Q6.4 21.6 6.4 16.6 Z" fill="#7b83eb"/><rect x="0.6" y="6.2" width="11.8" height="11.8" rx="1.4" fill="#4b53bc"/><path d="M3.6 9.4 H9.4 M6.5 9.4 V15.4" stroke="#fff" stroke-width="1.5"/></svg>
<svg class="abs" style="left:928.8px;top:13px;" width="24.5" height="21.5" viewBox="0 0 24.5 21.5"><path d="M0.6 2.2 Q0.6 0.6 2.2 0.6 H7.6 L10 3 H22 Q23.8 3 23.8 4.8 V7 H0.6 Z" fill="#e9a820"/><path d="M0.6 5 H23.8 V19.2 Q23.8 20.8 22.2 20.8 H2.2 Q0.6 20.8 0.6 19.2 Z" fill="#fbcd3f"/><path d="M5.6 20.8 V17.2 Q5.6 15.2 7.6 15.2 H16.8 Q18.8 15.2 18.8 17.2 V20.8 Z" fill="#1e86d8"/><rect x="8.4" y="17.2" width="7.6" height="1.6" rx="0.8" fill="#0f5fa8"/></svg>
<div class="abs" style="left:937.7px;top:40.2px;width:6.6px;height:2.6px;background:#8a8a8a;border-radius:1.3px;"></div>
<svg class="abs" style="left:972.8px;top:12.5px;" width="23.6" height="22.5" viewBox="0 0 23.6 22.5"><path d="M7.4 5 V3 Q7.4 1 9.4 1 H14.2 Q16.2 1 16.2 3 V5" fill="none" stroke="#3fa7f0" stroke-width="1.7"/><path d="M0.6 5 H23 V19.6 Q23 22 20.6 22 H3 Q0.6 22 0.6 19.6 Z" fill="#134e94"/><path d="M0.6 5 H23 V8 H0.6 Z" fill="#1a62b4"/><rect x="7" y="9.4" width="4.2" height="4.2" fill="#f25022"/><rect x="12.4" y="9.4" width="4.2" height="4.2" fill="#7fba00"/><rect x="7" y="14.8" width="4.2" height="4.2" fill="#00a4ef"/><rect x="12.4" y="14.8" width="4.2" height="4.2" fill="#ffb900"/></svg>
<svg class="abs" style="left:1016.7px;top:12px;" width="24.6" height="24.6" viewBox="0 0 24.6 24.6"><defs><linearGradient id="eg1" x1="0" y1="0" x2="1" y2="1"><stop offset="0" stop-color="#2fc6d8"/><stop offset="1" stop-color="#5fd34a"/></linearGradient></defs><circle cx="12.3" cy="12.3" r="12" fill="#1877c9"/><path d="M0.4 11 A12 12 0 0 1 24.2 10 Q24.6 15.2 19.4 15.8 Q14.4 16 14.6 12.8 Q14.2 8.6 10 8.8 Q3.6 9.2 0.4 11 Z" fill="url(#eg1)"/><path d="M8.6 12.4 Q7.6 18.8 14 21.8 Q18.4 23 21.6 19.4 Q16.6 21.6 12.6 18.4 Q10 16 10.8 12.2 Q11.2 9.6 14 9.4 Q9.2 8 8.6 12.4 Z" fill="#0b4f9a"/><path d="M11 13.6 Q11.6 10.2 14.4 10.4 Q16.4 10.8 16 13 Q15.8 14.6 17.6 15 Q20.4 15.2 22.6 13.4 Q21.6 18.2 16.8 18.6 Q11.4 18.4 11 13.6 Z" fill="#f2f6fa"/></svg>
<div class="abs" style="left:1025.7px;top:40.2px;width:6.6px;height:2.6px;background:#8a8a8a;border-radius:1.3px;"></div>
<svg class="abs" style="left:1062px;top:12.5px;" width="22" height="23" viewBox="0 0 22 23"><path d="M0.6 0.8 L11 6.4 L21.4 0.8 V17 L11 22.4 L0.6 17 Z" fill="#c8282d"/><path d="M5.4 8.2 L11 11.2 L16.6 8.2 V14.4 L11 17.2 L5.4 14.4 Z" fill="#efefef"/></svg>
<svg class="abs" style="left:1105px;top:12px;" width="24" height="24" viewBox="0 0 24 24"><circle cx="12" cy="12" r="11.5" fill="#fff"/><path d="M12 12 L1.9 6.4 A11.5 11.5 0 0 1 22.1 6.4 Z" fill="#e33b2e"/><path d="M12 12 L22.1 6.4 A11.5 11.5 0 0 1 11.2 23.5 Z" fill="#f8c51c"/><path d="M12 12 L11.2 23.5 A11.5 11.5 0 0 1 1.9 6.4 Z" fill="#2ca14c"/><circle cx="12" cy="12" r="5.4" fill="#fff"/><circle cx="12" cy="12" r="4.3" fill="#3f86f0"/></svg>
<div class="abs" style="left:1118px;top:6.4px;width:16px;height:16px;background:#cfcfd2;border-radius:50%;border:1px solid #9a9a9a;background:radial-gradient(circle at 50% 35%,#3a3a3a 0 18%,rgba(0,0,0,0) 19%),linear-gradient(180deg,#dedede 0 45%,#f5f5f5 45% 100%);"></div>
<div class="abs" style="left:1113.7px;top:40.2px;width:6.6px;height:2.6px;background:#8a8a8a;border-radius:1.3px;"></div>
<div class="abs" style="left:1141.7px;top:4.3px;width:38.3px;height:39.2px;background:#f9f9f9;border:1px solid #e4e4e4;border-radius:5px;"></div>
<div class="abs" style="left:1148.8px;top:11.8px;width:24px;height:24px;background:linear-gradient(180deg,#3d8bff,#0b4fe0);border-radius:9px;"></div>
<div class="t" style="left:1152.11px;top:17.62px;font-size:12.5px;color:#fff;letter-spacing:-0.177px;font-weight:bold;">zm</div>
<div class="abs" style="left:1153.3px;top:40.2px;width:15px;height:2.6px;background:#1a7fe0;border-radius:1.3px;"></div>
<div class="abs" style="left:1192.8px;top:11.8px;width:24.2px;height:24.2px;background:#1e3aa8;"></div>
<div class="t" style="left:1198.55px;top:15.92px;font-size:19px;color:#fff;letter-spacing:1.467px;font-weight:bold;">L</div>
<svg class="abs" style="left:1237px;top:12px;" width="24" height="24" viewBox="0 0 24 24"><circle cx="12" cy="12" r="11.5" fill="#fff"/><path d="M12 12 L1.9 6.4 A11.5 11.5 0 0 1 22.1 6.4 Z" fill="#e33b2e"/><path d="M12 12 L22.1 6.4 A11.5 11.5 0 0 1 11.2 23.5 Z" fill="#f8c51c"/><path d="M12 12 L11.2 23.5 A11.5 11.5 0 0 1 1.9 6.4 Z" fill="#2ca14c"/><circle cx="12" cy="12" r="5.4" fill="#fff"/><circle cx="12" cy="12" r="4.3" fill="#3f86f0"/></svg>
<div class="abs" style="left:1250px;top:6.4px;width:16px;height:16px;background:#1c2a66;border-radius:50%;background:radial-gradient(circle at 60% 40%,#dfe6f2 0 20%,rgba(0,0,0,0) 21%),radial-gradient(circle at 30% 75%,#d9a02a 0 18%,rgba(0,0,0,0) 19%),#172560;"></div>
<div class="abs" style="left:1245.7px;top:40.2px;width:6.6px;height:2.6px;background:#8a8a8a;border-radius:1.3px;"></div>
<div class="abs" style="left:1282px;top:13px;width:21.8px;height:21.4px;background:linear-gradient(180deg,#f04a1e,#f7a21c);border:1px solid #aee6ea;"></div>
<div class="t" style="left:1283.08px;top:20.64px;font-size:9.4px;color:#fff;letter-spacing:0.269px;font-weight:bold;">CC4</div>
<div class="abs" style="left:1289.7px;top:40.2px;width:6.6px;height:2.6px;background:#8a8a8a;border-radius:1.3px;"></div>
<div class="abs" style="left:1330.6px;top:13px;width:18px;height:21.4px;background:linear-gradient(180deg,#2b7cd3 0 33%,#185abd 33% 66%,#103f91 66%);border-radius:1.5px;"></div>
<div class="abs" style="left:1325px;top:17.6px;width:12.4px;height:12.4px;background:#185abd;border-radius:1.5px;box-shadow:0 0 2px rgba(0,0,0,.4);"></div>
<div class="t" style="left:1326.07px;top:19.67px;font-size:9.6px;color:#fff;letter-spacing:0.961px;font-weight:bold;">W</div>
<div class="abs" style="left:1333.7px;top:40.2px;width:6.6px;height:2.6px;background:#8a8a8a;border-radius:1.3px;"></div>
<div class="abs" style="left:1360.8px;top:4.3px;width:40.2px;height:39.2px;background:#efb4b2;border-radius:5px;"></div>
<svg class="abs" style="left:1370px;top:12.5px;" width="22" height="22" viewBox="0 0 22 22"><defs><linearGradient id="pg" x1="0" y1="0" x2="1" y2="1"><stop offset="0" stop-color="#2a8df0"/><stop offset="1" stop-color="#7a4fd8"/></linearGradient></defs><rect x="0" y="0" width="22" height="22" rx="3" fill="url(#pg)"/><path d="M0 17 L10.6 6.4 L22 17.8 V19 Q22 22 19 22 H3 Q0 22 0 19 Z" fill="#35b8f2"/><path d="M4 22 L14 12 L22 20 Q21.6 22 19 22 Z" fill="#1f8de0"/><circle cx="16.2" cy="4.6" r="1.7" fill="#fff"/></svg>
<div class="abs" style="left:1377.5px;top:40.2px;width:6.6px;height:2.6px;background:#d42a2a;border-radius:1.3px;"></div>
<svg class="abs" style="left:1688.5px;top:21px;" width="10.6" height="6.6" viewBox="0 0 10.6 6.6"><path d="M0.7 5.8 L5.3 1 L9.9 5.8" fill="none" stroke="#1a1a1a" stroke-width="1.4"/></svg>
<svg class="abs" style="left:1720px;top:15.5px;" width="14" height="17" viewBox="0 0 14 17"><rect x="2.6" y="0.6" width="6" height="4.4" fill="none" stroke="#1a1a1a" stroke-width="1"/><rect x="4" y="1.8" width="1.1" height="1.3" fill="#1a1a1a"/><rect x="6.2" y="1.8" width="1.1" height="1.3" fill="#1a1a1a"/><path d="M1.2 5 H10 V14.4 Q10 15.6 8.8 15.6 H2.4 Q1.2 15.6 1.2 14.4 Z" fill="none" stroke="#1a1a1a" stroke-width="1.1"/><path d="M8 13.4 L9.8 15.4 L13.4 11.4" fill="none" stroke="#1a1a1a" stroke-width="1.1"/></svg>
<svg class="abs" style="left:1751.5px;top:16px;" width="13" height="17" viewBox="0 0 13 17"><rect x="3.8" y="0.7" width="5.4" height="9.6" rx="2.7" fill="none" stroke="#1f6fd0" stroke-width="1.3"/><path d="M1 7.6 Q1 12.6 6.5 12.6 Q12 12.6 12 7.6" fill="none" stroke="#1f6fd0" stroke-width="1.3"/><path d="M6.5 12.6 V16" stroke="#1f6fd0" stroke-width="1.3"/></svg>
<svg class="abs" style="left:1781.5px;top:15.5px;" width="17" height="16.5" viewBox="0 0 17 16.5"><path d="M12 2.2 H1.6 Q0.8 2.2 0.8 3 V11.4 Q0.8 12.2 1.6 12.2 H12" fill="none" stroke="#1a1a1a" stroke-width="1.1"/><path d="M4 15.6 H10 M7 12.4 V15.4" stroke="#1a1a1a" stroke-width="1.1"/><rect x="12.6" y="0.6" width="3.2" height="4.6" rx="0.8" fill="none" stroke="#1a1a1a" stroke-width="1"/><path d="M14.2 5.2 V15.8" stroke="#1a1a1a" stroke-width="1"/></svg>
<svg class="abs" style="left:1805.5px;top:17.5px;" width="17" height="14" viewBox="0 0 17 14"><path d="M0.8 4.6 H3.6 L7.4 1 V12.6 L3.6 9 H0.8 Z" fill="none" stroke="#1a1a1a" stroke-width="1.1" stroke-linejoin="round"/><path d="M9.4 4.4 Q10.8 6.8 9.4 9.2 M11.4 2.6 Q13.8 6.8 11.4 11" fill="none" stroke="#1a1a1a" stroke-width="1.1" stroke-linecap="round"/><path d="M13.6 1 Q16.6 6.8 13.6 12.6" fill="none" stroke="#b5b5b5" stroke-width="1" stroke-linecap="round"/></svg>
<div class="t" style="left:1871.94px;top:10.44px;font-size:12px;color:#1a1a1a;letter-spacing:-0.127px;">13:25</div>
<div class="t" style="left:1838.74px;top:26.04px;font-size:12px;color:#1a1a1a;letter-spacing:0.273px;">07/02/2025</div>
</div>
<div class="abs" style="left:1600px;top:1030.2px;width:320px;height:1.8px;background:#141414"></div>
</div></body></html>
